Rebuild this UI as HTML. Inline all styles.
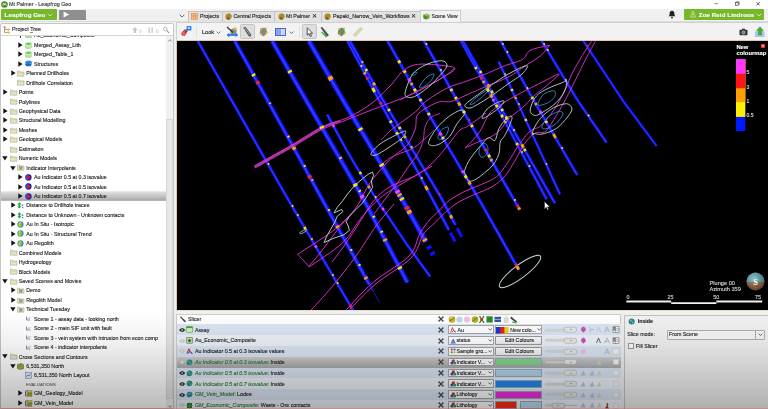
<!DOCTYPE html><html><head><meta charset="utf-8"><title>Mt Palmer - Leapfrog Geo</title><style>
html,body{margin:0;padding:0}
body{width:768px;height:409px;overflow:hidden;background:#f0f0f0;position:relative;font-family:"Liberation Sans",sans-serif;color:#1a1a1a}
.a{position:absolute}
.t{position:absolute;white-space:nowrap;font-size:5.3px;line-height:9.4px;height:9.4px;color:#1c1c1c;-webkit-text-stroke:.12px currentColor}
.b{font-weight:bold}
.i{font-style:italic}
svg{position:absolute;overflow:visible}
</style></head><body><div id="app" style="position:absolute;left:0;top:0;width:768px;height:409px;overflow:hidden;will-change:transform"><div class="a" style="left:0px;top:0px;width:768px;height:8.5px;background:#ffffff;"></div><svg style="left:1px;top:0.5px" width="7" height="7" viewBox="0 0 7 7"><circle cx="3.5" cy="3.5" r="3.3" fill="#4c8a30"/><path d="M1.6 4.6 L2.8 2.2 L3.6 3.8 L4.4 2.6 L5.4 4.6" stroke="#fff" stroke-width=".8" fill="none"/></svg><div class="t " style="left:9px;top:-0.50px;font-size:5.4px;color:#333">Mt Palmer - Leapfrog Geo</div><svg style="left:700px;top:0" width="68" height="8" viewBox="0 0 68 8"><path d="M14.5 3.6h3.4" stroke="#555" stroke-width=".7"/><rect x="35.6" y="2.6" width="2.6" height="2.6" fill="none" stroke="#444" stroke-width=".7"/><path d="M36.6 2.6v-.8h2.6v2.6h-.9" fill="none" stroke="#444" stroke-width=".6"/><path d="M56.5 2.2l3.2 3.2m0-3.2l-3.2 3.2" stroke="#333" stroke-width=".8"/></svg><div class="a" style="left:0px;top:8.5px;width:768px;height:13px;background:#f0f0f0;"></div><div class="a" style="left:1px;top:9px;width:55.5px;height:10.8px;background:#76b82a;border-radius:1px"></div><div class="t b" style="left:4.6px;top:10.00px;font-size:6.2px;color:#fff;letter-spacing:.05px">Leapfrog Geo</div><svg style="left:47px;top:12.6px" width="6" height="4" viewBox="0 0 6 4"><path d="M.7.8l2.3 2.2L5.3.8" stroke="#e8f4d8" stroke-width=".8" fill="none"/></svg><div class="a" style="left:59px;top:9.5px;width:27px;height:10px;background:#8f8f8f;border-radius:.5px"></div><svg style="left:62.5px;top:11.3px" width="7" height="7" viewBox="0 0 7 7"><path d="M.6.4v6l5.6-3z" fill="#fff"/></svg><div class="a" style="left:0px;top:21.3px;width:768px;height:0.8px;background:#dcdcdc;"></div><svg style="left:178.5px;top:13.5px" width="6" height="4" viewBox="0 0 6 4"><path d="M.7.8l2.3 2.2L5.3.8" stroke="#444" stroke-width=".8" fill="none"/></svg><div class="a" style="left:188px;top:11.2px;width:32.60000000000001px;height:10px;background:#e2e2e2;border:.4px solid #c4c4c4;border-bottom:none"></div><div class="a" style="left:221.8px;top:11.2px;width:51.39999999999999px;height:10px;background:#e2e2e2;border:.4px solid #c4c4c4;border-bottom:none"></div><div class="a" style="left:274.4px;top:11.2px;width:45.2px;height:10px;background:#e2e2e2;border:.4px solid #c4c4c4;border-bottom:none"></div><div class="a" style="left:320.8px;top:11.2px;width:98.00000000000001px;height:10px;background:#e2e2e2;border:.4px solid #c4c4c4;border-bottom:none"></div><div class="a" style="left:420px;top:10px;width:41px;height:13px;background:#f2f2f2;border:1px solid #cfcfcf;border-bottom:none;box-sizing:border-box"></div><svg style="left:191.4px;top:13px" width="7" height="7" viewBox="0 0 7 7"><g fill="none" stroke="#ee8a2c" stroke-width=".9"><rect x=".6" y=".6" width="2.3" height="2.3"/><rect x="4" y=".6" width="2.3" height="2.3"/><rect x=".6" y="4" width="2.3" height="2.3"/><rect x="4" y="4" width="2.3" height="2.3"/></g></svg><div class="t " style="left:200px;top:11.70px;font-size:5.3px;">Projects</div><svg style="left:225px;top:12.8px" width="7" height="7" viewBox="0 0 7 7"><circle cx="3.5" cy="3.5" r="3.1" fill="#e07a1a"/><path d="M3.5 .4A3.1 3.1 0 0 1 6.6 3.5L3.5 3.5z" fill="#6aa33a"/><path d="M1 5.2A3.1 3.1 0 0 0 5 6.2L3.5 3.5z" fill="#3d7a3a"/></svg><div class="t " style="left:233.5px;top:11.70px;font-size:5.3px;">Central Projects</div><svg style="left:277.5px;top:12.8px" width="7" height="7" viewBox="0 0 7 7"><circle cx="3.5" cy="3.5" r="3.1" fill="#e07a1a"/><path d="M3.5 .4A3.1 3.1 0 0 1 6.6 3.5L3.5 3.5z" fill="#6aa33a"/><path d="M1 5.2A3.1 3.1 0 0 0 5 6.2L3.5 3.5z" fill="#3d7a3a"/></svg><div class="t " style="left:286px;top:11.70px;font-size:5.3px;">Mt Palmer</div><div class="t " style="left:312.3px;top:11.60px;font-size:5.6px;color:#222">✕</div><svg style="left:324px;top:12.8px" width="7" height="7" viewBox="0 0 7 7"><circle cx="3.5" cy="3.5" r="3.1" fill="#e07a1a"/><path d="M3.5 .4A3.1 3.1 0 0 1 6.6 3.5L3.5 3.5z" fill="#6aa33a"/><path d="M1 5.2A3.1 3.1 0 0 0 5 6.2L3.5 3.5z" fill="#3d7a3a"/></svg><div class="t " style="left:333px;top:11.70px;font-size:5.3px;">Papaki_Narrow_Vein_Workflows</div><div class="t " style="left:411.3px;top:11.60px;font-size:5.6px;color:#222">✕</div><svg style="left:423px;top:12.5px" width="7" height="7" viewBox="0 0 7 7"><path d="M3.5.5L6.5 1.8V5.2L3.5 6.6L.5 5.2V1.8z" fill="#6aa33a"/><path d="M3.5 3.1V6.6L.5 5.2V1.8z" fill="#4b8a2a"/><path d="M.5 1.8L3.5 3.1L6.5 1.8L3.5.5z" fill="#9ccc5a"/></svg><div class="t " style="left:431.6px;top:11.70px;font-size:4.95px;">Scene View</div><svg style="left:667.600px;top:9.800px" width="8" height="9.200" viewBox="0 0 7 8"><path d="M3.5.6c1.5 0 2.1 1.2 2.1 2.6c0 1.3.6 1.9.9 2.3H.5c.3-.4.9-1 .9-2.3C1.4 1.800 2 .6 3.500 .6z" fill="#222"/><circle cx="3.500" cy="6.6" r=".8" fill="#222"/></svg><div class="a" style="left:684px;top:9.3px;width:80px;height:10.5px;background:#76b82a;border-radius:1px"></div><svg style="left:689.5px;top:11.4px" width="6" height="6.500" viewBox="0 0 6 6.500"><circle cx="3" cy="1.800" r="1.300" fill="none" stroke="#e8f4d8" stroke-width=".6"/><path d="M.6 6c0-1.800 1-2.500 2.400-2.500S5.400 4.200 5.400 6z" fill="none" stroke="#e8f4d8" stroke-width=".6"/></svg><div class="t b" style="left:698.8px;top:9.50px;font-size:6.1px;color:#fff;letter-spacing:.12px">Zoe Reid Lindroos</div><svg style="left:755.500px;top:12.800px" width="6" height="4" viewBox="0 0 6 4"><path d="M.7.8l2.300 2.200L5.300.8" stroke="#e8f4d8" stroke-width=".8" fill="none"/></svg><div class="a" style="left:0px;top:23px;width:174px;height:386px;background:#ffffff;border:1px solid #c6c6c6;border-radius:2px 2px 0 0;box-sizing:border-box"></div><div class="a" style="left:1px;top:35px;width:172px;height:1px;background:#d4d4d4;"></div><svg style="left:3px;top:25.500px" width="8" height="8" viewBox="0 0 8 8"><path d="M1.500 1v5.500h3M1.500 3.500h3" stroke="#777" stroke-width=".7" fill="none"/><rect x=".6" y=".3" width="2.200" height="1.800" fill="#e88b2a"/><rect x="4.300" y="2.600" width="2.400" height="1.800" fill="#e8a040"/><rect x="4.300" y="5.600" width="2.400" height="1.800" fill="#e8a040"/></svg><div class="t " style="left:12px;top:25.40px;font-size:5.4px;">Project Tree</div><div class="a" style="left:30px;top:32px;width:3px;height:1px;background:#8a8a8a;"></div><svg style="left:131px;top:26px" width="42" height="9" viewBox="0 0 42 9"><g fill="#c6c6c6"><path d="M4 1L1.200 4h1.600v3h2.400V4h1.600z"/><rect x="17.500" y="1.500" width="1.300" height="5.500"/><rect x="20.500" y="1.500" width="1.300" height="5.500"/></g><g fill="none" stroke="#c0c0c0" stroke-width=".6"><ellipse cx="9.300" cy="5.200" rx="1" ry="1.600"/><ellipse cx="26.300" cy="5.200" rx="1" ry="1.600"/></g><circle cx="34.300" cy="3" r="1.800" fill="none" stroke="#aaa" stroke-width=".8"/><path d="M35.600 4.400l2.600 2.800" stroke="#999" stroke-width="1.100"/></svg><div class="a" style="left:166px;top:36px;width:7px;height:372px;background:#f0f0f0;"></div><svg style="left:167.500px;top:38.500px" width="4" height="3" viewBox="0 0 4 3"><path d="M.4 2.400L2 .7l1.600 1.700" stroke="#555" stroke-width=".7" fill="none"/></svg><svg style="left:167.500px;top:405px" width="4" height="3" viewBox="0 0 4 3"><path d="M.4.600L2 2.300 3.600.600" stroke="#555" stroke-width=".7" fill="none"/></svg><div class="a" style="left:166px;top:119px;width:7px;height:280px;background:#e6e6e6;border:1px solid #d8d8d8;box-sizing:border-box"></div><svg style="left:0;top:0" width="174" height="409" viewBox="0 0 174 409"><defs><linearGradient id="sg" x1="0" y1="0" x2="0" y2="1"><stop offset="0" stop-color="#e2e2e2"/><stop offset=".85" stop-color="#b2b2b2"/><stop offset="1" stop-color="#8e8e8e"/></linearGradient></defs><rect x="1" y="191.27" width="165" height="9.400" fill="url(#sg)"/></svg><div class="a" style="left:0;top:36.300px;width:166px;height:3px;overflow:hidden"><div class="t" style="left:34px;top:-5.500px">Au_Economic_Composite</div><div class="a" style="left:25px;top:-4px;width:6.500px;height:6px;background:#a8dc90;border-radius:1px"></div><div class="a" style="left:19.500px;top:0px;width:1.500px;height:1.500px;background:#222;border-radius:1px"></div></div><svg style="left:18px;top:41.85px" width="4.800" height="6" viewBox="0 0 4.800 6"><path d="M.3.200v5.600L4.600 3z" fill="#161616"/></svg><svg style="left:25px;top:41.550000000000004px" width="7" height="6.800" viewBox="0 0 7 6.800"><rect x=".4" y=".8" width="6" height="5.600" rx=".8" fill="#b8e8a0" stroke="#7cc060" stroke-width=".4"/><path d="M1.500 1.200h4.200l-.5 1.600H2z" fill="#58b848"/><path d="M1.200 3.500h4.600" stroke="#e8ffe0" stroke-width=".5"/></svg><div class="t " style="left:34px;top:40.90px;">Merged_Assay_Lith</div><svg style="left:18px;top:51.295px" width="4.800" height="6" viewBox="0 0 4.800 6"><path d="M.3.200v5.600L4.600 3z" fill="#161616"/></svg><svg style="left:25px;top:50.995000000000005px" width="7" height="6.800" viewBox="0 0 7 6.800"><rect x=".4" y=".8" width="6" height="5.600" rx=".8" fill="#b8e8a0" stroke="#7cc060" stroke-width=".4"/><path d="M1.500 1.200h4.200l-.5 1.600H2z" fill="#58b848"/><path d="M1.200 3.500h4.600" stroke="#e8ffe0" stroke-width=".5"/></svg><div class="t " style="left:34px;top:50.34px;">Merged_Table_1</div><svg style="left:18px;top:60.74px" width="4.800" height="6" viewBox="0 0 4.800 6"><path d="M.3.200v5.600L4.600 3z" fill="#161616"/></svg><svg style="left:25px;top:60.440000000000005px" width="7" height="6.800" viewBox="0 0 7 6.800"><ellipse cx="3.600" cy="2" rx="3" ry="1.500" fill="#2a86e0"/><ellipse cx="3.400" cy="4.700" rx="3" ry="1.600" fill="#1868c8"/><path d="M.6 2v2.600M6.500 2v2.600" stroke="#1868c8" stroke-width=".6"/></svg><div class="t " style="left:34px;top:59.79px;">Structures</div><svg style="left:10.5px;top:70.185px" width="4.800" height="6" viewBox="0 0 4.800 6"><path d="M.3.200v5.600L4.600 3z" fill="#161616"/></svg><svg style="left:17.3px;top:69.985px" width="7.400" height="6.600" viewBox="0 0 7.400 6.600"><path d="M.4 1.200h2.400l.6.800h3.600v4.200H.4z" fill="#e6e6c4" stroke="#9c9c7c" stroke-width=".5"/><path d="M.4 2.900h6.600" stroke="#b8b894" stroke-width=".4"/></svg><div class="t " style="left:26.3px;top:69.23px;">Planned Drillholes</div><svg style="left:17.3px;top:79.42999999999999px" width="7.400" height="6.600" viewBox="0 0 7.400 6.600"><path d="M.4 1.200h2.400l.6.800h3.600v4.200H.4z" fill="#e6e6c4" stroke="#9c9c7c" stroke-width=".5"/><path d="M.4 2.900h6.600" stroke="#b8b894" stroke-width=".4"/></svg><div class="t " style="left:26.3px;top:78.68px;">Drillhole Correlation</div><svg style="left:3px;top:89.075px" width="4.800" height="6" viewBox="0 0 4.800 6"><path d="M.3.200v5.600L4.600 3z" fill="#161616"/></svg><svg style="left:9.5px;top:88.875px" width="7.400" height="6.600" viewBox="0 0 7.400 6.600"><path d="M.4 1.200h2.400l.6.800h3.600v4.200H.4z" fill="#e6e6c4" stroke="#9c9c7c" stroke-width=".5"/><path d="M.4 2.900h6.600" stroke="#b8b894" stroke-width=".4"/></svg><div class="t " style="left:18.7px;top:88.12px;">Points</div><svg style="left:9.5px;top:98.32000000000001px" width="7.400" height="6.600" viewBox="0 0 7.400 6.600"><path d="M.4 1.200h2.400l.6.800h3.600v4.200H.4z" fill="#e6e6c4" stroke="#9c9c7c" stroke-width=".5"/><path d="M.4 2.900h6.600" stroke="#b8b894" stroke-width=".4"/></svg><div class="t " style="left:18.7px;top:97.57px;">Polylines</div><svg style="left:3px;top:107.965px" width="4.800" height="6" viewBox="0 0 4.800 6"><path d="M.3.200v5.600L4.600 3z" fill="#161616"/></svg><svg style="left:9.5px;top:107.765px" width="7.400" height="6.600" viewBox="0 0 7.400 6.600"><path d="M.4 1.200h2.400l.6.800h3.600v4.200H.4z" fill="#e6e6c4" stroke="#9c9c7c" stroke-width=".5"/><path d="M.4 2.900h6.600" stroke="#b8b894" stroke-width=".4"/></svg><div class="t " style="left:18.7px;top:107.02px;">Geophysical Data</div><svg style="left:3px;top:117.41px" width="4.800" height="6" viewBox="0 0 4.800 6"><path d="M.3.200v5.600L4.600 3z" fill="#161616"/></svg><svg style="left:9.5px;top:117.21px" width="7.400" height="6.600" viewBox="0 0 7.400 6.600"><path d="M.4 1.200h2.400l.6.800h3.600v4.200H.4z" fill="#e6e6c4" stroke="#9c9c7c" stroke-width=".5"/><path d="M.4 2.900h6.600" stroke="#b8b894" stroke-width=".4"/></svg><div class="t " style="left:18.7px;top:116.46px;">Structural Modelling</div><svg style="left:3px;top:126.85499999999999px" width="4.800" height="6" viewBox="0 0 4.800 6"><path d="M.3.200v5.600L4.600 3z" fill="#161616"/></svg><svg style="left:9.5px;top:126.65499999999999px" width="7.400" height="6.600" viewBox="0 0 7.400 6.600"><path d="M.4 1.200h2.400l.6.800h3.600v4.200H.4z" fill="#e6e6c4" stroke="#9c9c7c" stroke-width=".5"/><path d="M.4 2.900h6.600" stroke="#b8b894" stroke-width=".4"/></svg><div class="t " style="left:18.7px;top:125.90px;">Meshes</div><svg style="left:3px;top:136.3px" width="4.800" height="6" viewBox="0 0 4.800 6"><path d="M.3.200v5.600L4.600 3z" fill="#161616"/></svg><svg style="left:9.5px;top:136.10000000000002px" width="7.400" height="6.600" viewBox="0 0 7.400 6.600"><path d="M.4 1.200h2.400l.6.800h3.600v4.200H.4z" fill="#e6e6c4" stroke="#9c9c7c" stroke-width=".5"/><path d="M.4 2.900h6.600" stroke="#b8b894" stroke-width=".4"/></svg><div class="t " style="left:18.7px;top:135.35px;">Geological Models</div><svg style="left:9.5px;top:145.54500000000002px" width="7.400" height="6.600" viewBox="0 0 7.400 6.600"><path d="M.4 1.200h2.400l.6.800h3.600v4.200H.4z" fill="#e6e6c4" stroke="#9c9c7c" stroke-width=".5"/><path d="M.4 2.900h6.600" stroke="#b8b894" stroke-width=".4"/></svg><div class="t " style="left:18.7px;top:144.80px;">Estimation</div><svg style="left:2.1px;top:156.09px" width="5.800" height="4.600" viewBox="0 0 5.800 4.600"><path d="M.2.300h5.400L2.900 4.400z" fill="#161616"/></svg><svg style="left:9.5px;top:154.99px" width="7.400" height="6.600" viewBox="0 0 7.400 6.600"><path d="M.4 1.200h2.400l.6.800h3.600v4.200H.4z" fill="#e6e6c4" stroke="#9c9c7c" stroke-width=".5"/><path d="M.4 2.900h6.600" stroke="#b8b894" stroke-width=".4"/></svg><div class="t " style="left:18.7px;top:154.24px;">Numeric Models</div><svg style="left:9.6px;top:165.535px" width="5.800" height="4.600" viewBox="0 0 5.800 4.600"><path d="M.2.300h5.400L2.900 4.400z" fill="#161616"/></svg><svg style="left:17.3px;top:164.435px" width="7.400" height="6.600" viewBox="0 0 7.400 6.600"><path d="M.4 1.200h2.400l.6.800h3.600v4.200H.4z" fill="#e6e6c4" stroke="#9c9c7c" stroke-width=".5"/><rect x="2.500" y="2.800" width="2.600" height="2.400" fill="#8aa88a" stroke="#667" stroke-width=".3"/></svg><div class="t " style="left:26.3px;top:163.69px;">Indicator Interpolants</div><svg style="left:18px;top:174.08px" width="4.800" height="6" viewBox="0 0 4.800 6"><path d="M.3.200v5.600L4.600 3z" fill="#161616"/></svg><svg style="left:25px;top:173.78px" width="7" height="6.800" viewBox="0 0 7 6.800"><circle cx="3.500" cy="3.400" r="3.100" fill="#1c1c98"/><path d="M3.500.3A3.100 3.100 0 0 0 3.500 6.500z" fill="#2848e8"/><circle cx="3.600" cy="3.400" r="1.700" fill="#e41818"/></svg><div class="t " style="left:34px;top:173.13px;">Au Indicator 0.5 at 0.3 isovalue</div><svg style="left:18px;top:183.525px" width="4.800" height="6" viewBox="0 0 4.800 6"><path d="M.3.200v5.600L4.600 3z" fill="#161616"/></svg><svg style="left:25px;top:183.225px" width="7" height="6.800" viewBox="0 0 7 6.800"><circle cx="3.500" cy="3.400" r="3.100" fill="#1c1c98"/><path d="M3.500.3A3.100 3.100 0 0 0 3.500 6.500z" fill="#2848e8"/><circle cx="3.600" cy="3.400" r="1.700" fill="#e41818"/></svg><div class="t " style="left:34px;top:182.58px;">Au Indicator 0.5 at 0.5 isovalue</div><svg style="left:18px;top:192.97px" width="4.800" height="6" viewBox="0 0 4.800 6"><path d="M.3.200v5.600L4.600 3z" fill="#161616"/></svg><svg style="left:25px;top:192.67px" width="7" height="6.800" viewBox="0 0 7 6.800"><circle cx="3.500" cy="3.400" r="3.100" fill="#1c1c98"/><path d="M3.500.3A3.100 3.100 0 0 0 3.500 6.500z" fill="#2848e8"/><circle cx="3.600" cy="3.400" r="1.700" fill="#e41818"/></svg><div class="t " style="left:34px;top:192.02px;">Au Indicator 0.5 at 0.7 isovalue</div><svg style="left:10.5px;top:202.415px" width="4.800" height="6" viewBox="0 0 4.800 6"><path d="M.3.200v5.600L4.600 3z" fill="#161616"/></svg><svg style="left:17.3px;top:202.11499999999998px" width="7" height="6.800" viewBox="0 0 7 6.800"><path d="M2.400.2L.3 2.500h1.300V4.300H.3L2.400 6.600 4.500 4.300H3.200V2.500H4.500z" fill="#28a040"/><rect x="4.800" y="2.600" width="1.500" height="1.300" fill="#4868d8"/><rect x="5" y="5" width="1.300" height="1.200" fill="#4868d8"/></svg><div class="t " style="left:26.3px;top:201.47px;">Distance to Drillhole traces</div><svg style="left:10.5px;top:211.85999999999999px" width="4.800" height="6" viewBox="0 0 4.800 6"><path d="M.3.200v5.600L4.600 3z" fill="#161616"/></svg><svg style="left:17.3px;top:211.55999999999997px" width="7" height="6.800" viewBox="0 0 7 6.800"><path d="M2.400.2L.3 2.500h1.300V4.300H.3L2.400 6.600 4.500 4.300H3.200V2.500H4.500z" fill="#28a040"/><rect x="4.800" y="2.600" width="1.500" height="1.300" fill="#4868d8"/><rect x="5" y="5" width="1.300" height="1.200" fill="#4868d8"/></svg><div class="t " style="left:26.3px;top:210.91px;">Distance to Unknown - Unknown contacts</div><svg style="left:10.5px;top:221.305px" width="4.800" height="6" viewBox="0 0 4.800 6"><path d="M.3.200v5.600L4.600 3z" fill="#161616"/></svg><svg style="left:17.3px;top:221.005px" width="7" height="6.800" viewBox="0 0 7 6.800"><circle cx="3.500" cy="3.400" r="3.100" fill="#2a98b0"/><path d="M2.200 1.200c1.600-.6 2.800.6 2.600 2.200c-.2 1.400-1.200 2.200-2.400 2c-1-.4-1.200-1.600-.8-2.600z" fill="#e8c820"/><circle cx="3.600" cy="3.300" r=".8" fill="#60b040"/></svg><div class="t " style="left:26.3px;top:220.36px;">Au In Situ - Isotropic</div><svg style="left:10.5px;top:230.75px" width="4.800" height="6" viewBox="0 0 4.800 6"><path d="M.3.200v5.600L4.600 3z" fill="#161616"/></svg><svg style="left:17.3px;top:230.45px" width="7" height="6.800" viewBox="0 0 7 6.800"><circle cx="3.500" cy="3.400" r="3.100" fill="#2a98b0"/><path d="M2.200 1.200c1.600-.6 2.800.6 2.600 2.200c-.2 1.400-1.200 2.200-2.400 2c-1-.4-1.200-1.600-.8-2.600z" fill="#e8c820"/><circle cx="3.600" cy="3.300" r=".8" fill="#60b040"/></svg><div class="t " style="left:26.3px;top:229.80px;">Au In Situ - Structural Trend</div><svg style="left:10.5px;top:240.195px" width="4.800" height="6" viewBox="0 0 4.800 6"><path d="M.3.200v5.600L4.600 3z" fill="#161616"/></svg><svg style="left:17.3px;top:239.89499999999998px" width="7" height="6.800" viewBox="0 0 7 6.800"><circle cx="3.500" cy="3.400" r="3.100" fill="#2a98b0"/><path d="M2.200 1.200c1.600-.6 2.800.6 2.600 2.200c-.2 1.400-1.200 2.200-2.400 2c-1-.4-1.200-1.600-.8-2.600z" fill="#e8c820"/><circle cx="3.600" cy="3.300" r=".8" fill="#60b040"/></svg><div class="t " style="left:26.3px;top:239.25px;">Au Regolith</div><svg style="left:9.5px;top:249.44000000000003px" width="7.400" height="6.600" viewBox="0 0 7.400 6.600"><path d="M.4 1.200h2.400l.6.800h3.600v4.200H.4z" fill="#e6e6c4" stroke="#9c9c7c" stroke-width=".5"/><path d="M.4 2.900h6.600" stroke="#b8b894" stroke-width=".4"/></svg><div class="t " style="left:18.7px;top:248.69px;">Combined Models</div><svg style="left:9.5px;top:258.88500000000005px" width="7.400" height="6.600" viewBox="0 0 7.400 6.600"><path d="M.4 1.200h2.400l.6.800h3.600v4.200H.4z" fill="#e6e6c4" stroke="#9c9c7c" stroke-width=".5"/><path d="M.4 2.900h6.600" stroke="#b8b894" stroke-width=".4"/></svg><div class="t " style="left:18.7px;top:258.14px;">Hydrogeology</div><svg style="left:9.5px;top:268.33000000000004px" width="7.400" height="6.600" viewBox="0 0 7.400 6.600"><path d="M.4 1.200h2.400l.6.800h3.600v4.200H.4z" fill="#e6e6c4" stroke="#9c9c7c" stroke-width=".5"/><path d="M.4 2.900h6.600" stroke="#b8b894" stroke-width=".4"/></svg><div class="t " style="left:18.7px;top:267.58px;">Block Models</div><svg style="left:2.1px;top:278.875px" width="5.800" height="4.600" viewBox="0 0 5.800 4.600"><path d="M.2.300h5.400L2.900 4.400z" fill="#161616"/></svg><svg style="left:9.5px;top:277.77500000000003px" width="7.400" height="6.600" viewBox="0 0 7.400 6.600"><path d="M.4 1.200h2.400l.6.800h3.600v4.200H.4z" fill="#e6e6c4" stroke="#9c9c7c" stroke-width=".5"/><path d="M.4 2.900h6.600" stroke="#b8b894" stroke-width=".4"/></svg><div class="t " style="left:18.7px;top:277.03px;">Saved Scenes and Movies</div><svg style="left:10.5px;top:287.42px" width="4.800" height="6" viewBox="0 0 4.800 6"><path d="M.3.200v5.600L4.600 3z" fill="#161616"/></svg><svg style="left:17.3px;top:287.22px" width="7.400" height="6.600" viewBox="0 0 7.400 6.600"><path d="M.4 1.200h2.400l.6.800h3.600v4.200H.4z" fill="#e6e6c4" stroke="#9c9c7c" stroke-width=".5"/><rect x="2.500" y="2.800" width="2.600" height="2.400" fill="#8aa88a" stroke="#667" stroke-width=".3"/></svg><div class="t " style="left:26.3px;top:286.47px;">Demo</div><svg style="left:10.5px;top:296.865px" width="4.800" height="6" viewBox="0 0 4.800 6"><path d="M.3.200v5.600L4.600 3z" fill="#161616"/></svg><svg style="left:17.3px;top:296.665px" width="7.400" height="6.600" viewBox="0 0 7.400 6.600"><path d="M.4 1.200h2.400l.6.800h3.600v4.200H.4z" fill="#e6e6c4" stroke="#9c9c7c" stroke-width=".5"/><rect x="2.500" y="2.800" width="2.600" height="2.400" fill="#8aa88a" stroke="#667" stroke-width=".3"/></svg><div class="t " style="left:26.3px;top:295.92px;">Regolith Model</div><svg style="left:9.6px;top:307.21000000000004px" width="5.800" height="4.600" viewBox="0 0 5.800 4.600"><path d="M.2.300h5.400L2.900 4.400z" fill="#161616"/></svg><svg style="left:17.3px;top:306.11000000000007px" width="7.400" height="6.600" viewBox="0 0 7.400 6.600"><path d="M.4 1.200h2.400l.6.800h3.600v4.200H.4z" fill="#e6e6c4" stroke="#9c9c7c" stroke-width=".5"/><rect x="2.500" y="2.800" width="2.600" height="2.400" fill="#8aa88a" stroke="#667" stroke-width=".3"/></svg><div class="t " style="left:26.3px;top:305.36px;">Technical Tuesday</div><svg style="left:26px;top:316.45500000000004px" width="5" height="5" viewBox="0 0 5 5"><path d="M.5.500v3.500h3.800" stroke="#2a70c0" stroke-width=".7" fill="none"/><path d="M1.200 3.200l1.200-1.500 1 .8 1.200-1.500" stroke="#e08020" stroke-width=".6" fill="none"/></svg><div class="t " style="left:34px;top:314.81px;">Scene 1 - assay data - looking north</div><svg style="left:26px;top:325.90000000000003px" width="5" height="5" viewBox="0 0 5 5"><path d="M.5.500v3.500h3.800" stroke="#2a70c0" stroke-width=".7" fill="none"/><path d="M1.200 3.200l1.200-1.500 1 .8 1.200-1.500" stroke="#e08020" stroke-width=".6" fill="none"/></svg><div class="t " style="left:34px;top:324.25px;">Scene 2 - main SIF unit with fault</div><svg style="left:26px;top:335.345px" width="5" height="5" viewBox="0 0 5 5"><path d="M.5.500v3.500h3.800" stroke="#2a70c0" stroke-width=".7" fill="none"/><path d="M1.200 3.200l1.200-1.500 1 .8 1.200-1.500" stroke="#e08020" stroke-width=".6" fill="none"/></svg><div class="t " style="left:34px;top:333.70px;">Scene 3 - vein system with intrusion from econ comp</div><svg style="left:26px;top:344.79px" width="5" height="5" viewBox="0 0 5 5"><path d="M.5.500v3.500h3.800" stroke="#2a70c0" stroke-width=".7" fill="none"/><path d="M1.200 3.200l1.200-1.500 1 .8 1.200-1.500" stroke="#e08020" stroke-width=".6" fill="none"/></svg><div class="t " style="left:34px;top:343.14px;">Scene 4 - indicator interpolants</div><svg style="left:2.1px;top:354.435px" width="5.800" height="4.600" viewBox="0 0 5.800 4.600"><path d="M.2.300h5.400L2.900 4.400z" fill="#161616"/></svg><svg style="left:9.5px;top:353.33500000000004px" width="7.400" height="6.600" viewBox="0 0 7.400 6.600"><path d="M.4 1.200h2.400l.6.800h3.600v4.200H.4z" fill="#e6e6c4" stroke="#9c9c7c" stroke-width=".5"/><path d="M.4 2.900h6.600" stroke="#b8b894" stroke-width=".4"/></svg><div class="t " style="left:18.7px;top:352.59px;">Cross Sections and Contours</div><svg style="left:9.6px;top:363.88px" width="5.800" height="4.600" viewBox="0 0 5.800 4.600"><path d="M.2.300h5.400L2.900 4.400z" fill="#161616"/></svg><svg style="left:17.3px;top:362.68px" width="7" height="6.800" viewBox="0 0 7 6.800"><path d="M.5 1.500L4.500.500l2 1.200v4L2.500 6.500l-2-1z" fill="#b4ac3c" stroke="#4a4a20" stroke-width=".5"/><path d="M1.500 2.500l3-1M1.500 4l3.500-1" stroke="#4a8a3a" stroke-width=".6"/></svg><div class="t " style="left:26.3px;top:362.03px;">6,531,350 North</div><svg style="left:25px;top:372.125px" width="7" height="6.800" viewBox="0 0 7 6.800"><rect x=".5" y=".6" width="6" height="5.600" fill="#e8f0fa" stroke="#5a7aa8" stroke-width=".5"/><path d="M1.300 4.800l1.500-2 1.200 1.200 1.500-2.200" stroke="#2a60b0" stroke-width=".6" fill="none"/></svg><div class="t " style="left:34px;top:371.48px;">6,531,350 North Layout</div><div class="t " style="left:26px;top:379.92px;font-size:4.2px;color:#707070;letter-spacing:.1px">EVALUATIONS</div><svg style="left:18px;top:390.4150000000001px" width="4.800" height="6" viewBox="0 0 4.800 6"><path d="M.3.200v5.600L4.600 3z" fill="#161616"/></svg><svg style="left:25px;top:390.11500000000007px" width="7.500" height="6.800" viewBox="0 0 7.500 6.800"><path d="M1.200.400c-.8 2-.8 4 0 6" stroke="#222" stroke-width=".9" fill="none"/><rect x="2.200" y=".8" width="4.800" height="5.400" fill="#e8d040" stroke="#555" stroke-width=".3"/><path d="M2.200 2.600h4.800v1.800H2.200z" fill="#58a848"/><path d="M2.200 4.400h4.800v1.800H2.200z" fill="#c89030"/></svg><div class="t " style="left:34px;top:389.47px;">GM_Geology_Model</div><svg style="left:18px;top:399.86000000000007px" width="4.800" height="6" viewBox="0 0 4.800 6"><path d="M.3.200v5.600L4.600 3z" fill="#161616"/></svg><svg style="left:25px;top:399.56000000000006px" width="7.500" height="6.800" viewBox="0 0 7.500 6.800"><path d="M1.200.400c-.8 2-.8 4 0 6" stroke="#222" stroke-width=".9" fill="none"/><rect x="2.200" y=".8" width="4.800" height="5.400" fill="#e8d040" stroke="#555" stroke-width=".3"/><path d="M2.200 2.600h4.800v1.800H2.200z" fill="#58a848"/><path d="M2.200 4.400h4.800v1.800H2.200z" fill="#c89030"/></svg><div class="t " style="left:34px;top:398.91px;">GM_Vein_Model</div><div class="a" style="left:176.3px;top:22px;width:592px;height:19px;background:#f2f2f2;border-top:.5px solid #d0d0d0;border-left:.5px solid #d0d0d0;box-sizing:border-box"></div><div class="a" style="left:240px;top:24px;width:15px;height:15px;background:#dedede;border:1px solid #c4c4c4;box-sizing:border-box;border-radius:1.500px"></div><div class="a" style="left:302px;top:24px;width:15px;height:15px;background:#dedede;border:1px solid #c4c4c4;box-sizing:border-box;border-radius:1.500px"></div><div class="a" style="left:196px;top:26px;width:1px;height:12px;background:#e2e2e2;"></div><div class="a" style="left:299px;top:26px;width:1px;height:12px;background:#e2e2e2;"></div><svg style="left:179.500px;top:25px" width="13" height="13" viewBox="0 0 13 13"><path d="M1.200 8.200l3.300-3.600 3 1.800-2.800 4.600-2.900-.6z" fill="#d23030"/><path d="M2 8.600l2.800-1.800M2.600 10l2.600-1.600" stroke="#f4b0b0" stroke-width=".7"/><path d="M4.500 4.600l3 1.800" stroke="#8a1a1a" stroke-width=".6"/><rect x="6.600" y="1" width="4.800" height="4.600" rx=".6" fill="#2a86e8"/><rect x="7.800" y="2.200" width="2" height="1.800" fill="#bfe0ff"/><path d="M5.500 6l2.500-2" stroke="#2a60c0" stroke-width="1.200"/></svg><div class="t " style="left:202px;top:27.60px;font-size:5.6px;">Look</div><svg style="left:215.500px;top:30.800px" width="5" height="3.500" viewBox="0 0 5 3.500"><path d="M.6.600l1.900 1.900L4.400.600" stroke="#444" stroke-width=".7" fill="none"/></svg><svg style="left:225.500px;top:25.500px" width="13" height="12" viewBox="0 0 13 12"><path d="M4.500 3.500l4-1.500 2 1.500v4l-3 2-3-1.500z" fill="#8c8c8c"/><path d="M1 1l6 5.500" stroke="#333" stroke-width="1.300"/><path d="M2 9h8.500" stroke="#2a7ae8" stroke-width="1.800"/><path d="M3.200 6.800L.6 9l2.600 2.200zM9.600 6.800L12.200 9l-2.600 2.200z" fill="#2a7ae8"/><circle cx="9.300" cy="2.600" r="1.400" fill="#e8c828"/></svg><svg style="left:242px;top:26px" width="11" height="12" viewBox="0 0 11 12"><path d="M1.200 1.600l2.200-.8 6 8-.6 2-2-.6z" fill="#4a4a4a"/><path d="M2.600 1.600l5.800 8" stroke="#c8c8c8" stroke-width=".8"/></svg><svg style="left:258px;top:26px" width="11" height="12" viewBox="0 0 11 12"><path d="M3 2.500l4.500-.5 1.500 5-3.500 3-3.500-2z" fill="#888" stroke="#555" stroke-width=".4"/><circle cx="3" cy="3" r="1.100" fill="#e8c020"/><circle cx="8" cy="2.600" r="1.100" fill="#e8c020"/><circle cx="8.600" cy="7" r="1.100" fill="#e8c020"/><circle cx="3" cy="8" r="1.100" fill="#e8c020"/></svg><div class="a" style="left:275px;top:28px;width:11px;height:8px;background:#8aa4f0;border:1px solid #4868d0;box-sizing:border-box"></div><div class="a" style="left:281px;top:29px;width:4px;height:6px;background:#d4d8e6;"></div><svg style="left:289.300px;top:30.800px" width="5" height="3.500" viewBox="0 0 5 3.500"><path d="M.6.600l1.900 1.900L4.400.600" stroke="#444" stroke-width=".7" fill="none"/></svg><svg style="left:306px;top:26.500px" width="8" height="11" viewBox="0 0 8 11"><path d="M1.200.8v7.400l1.800-1.600 1.300 2.900 1.200-.5-1.300-2.800h2.400z" fill="#fff" stroke="#111" stroke-width=".7"/></svg><svg style="left:319px;top:26px" width="12" height="12" viewBox="0 0 12 12"><path d="M1.500 1.500l1.800-.4 6.500 8-1 1.500-1.600-.6z" fill="#555"/><path d="M2.500 6l5 5" stroke="#30c030" stroke-width="1.300"/></svg><svg style="left:335.500px;top:26px" width="12" height="12" viewBox="0 0 12 12"><path d="M3 2.500l4.500-.5 1.500 5-3.500 3-3.500-2z" fill="#777" stroke="#555" stroke-width=".4"/><circle cx="3.400" cy="3" r="1.100" fill="#e8c020"/><circle cx="8" cy="2.600" r="1.100" fill="#e8c020"/><circle cx="8.600" cy="7.500" r="1.100" fill="#e8c020"/><circle cx="3.400" cy="8.500" r="1.100" fill="#e8c020"/><path d="M3 7l5-3.500" stroke="#30c030" stroke-width="1.300"/></svg><svg style="left:352px;top:26px" width="12" height="12" viewBox="0 0 12 12"><path d="M1.500 9l7-7.500 1.800 1.500-7 7.500z" fill="#e8e0a0" stroke="#999" stroke-width=".5"/></svg><svg style="left:739px;top:28px" width="9" height="8" viewBox="0 0 9 8"><rect x=".5" y="1.800" width="8" height="5.400" rx=".8" fill="#333"/><rect x="3" y=".7" width="3" height="1.500" fill="#333"/><circle cx="4.500" cy="4.500" r="1.700" fill="#777" stroke="#ddd" stroke-width=".5"/></svg><svg style="left:754px;top:25.500px" width="12" height="12" viewBox="0 0 12 12"><rect x="1" y="5.500" width="9.500" height="5.500" fill="#a8c4e8"/><path d="M6 .8L2.500 4.800h2V9h3V4.800h2z" fill="#48b030" stroke="#2a8020" stroke-width=".4"/></svg><div class="a" style="left:176px;top:40px;width:592px;height:271px;background:#000;border-top:1px solid #e0c8a8;border-left:1px solid #e0c8a8;border-bottom:1px solid #e8dcc8;box-sizing:border-box;overflow:hidden"></div><svg style="left:0;top:0" width="768" height="409" viewBox="0 0 768 409"><defs><clipPath id="sc"><rect x="177" y="41" width="592" height="269"/></clipPath></defs><g clip-path="url(#sc)"><path d="M197.8 41 L288.5 200 L353.5 311" fill="none" stroke="#1010f8" stroke-width="2.9"/><path d="M197.8 41 L288.5 200 L353.5 311" fill="none" stroke="#3a52ff" stroke-width="1.16" opacity=".7" transform="translate(-.2,0)"/><path d="M234.8 41 L322.6 200 L369.5 284.5" fill="none" stroke="#1010f8" stroke-width="4.2"/><path d="M234.8 41 L322.6 200 L369.5 284.5" fill="none" stroke="#3a52ff" stroke-width="1.68" opacity=".7" transform="translate(-.2,0)"/><path d="M272.2 41 L306 100 L364 200 L407.5 282.5" fill="none" stroke="#1010f8" stroke-width="4.8"/><path d="M272.2 41 L306 100 L364 200 L407.5 282.5" fill="none" stroke="#3a52ff" stroke-width="1.92" opacity=".7" transform="translate(-.2,0)"/><path d="M327.2 114.5 L346.6 150 L355.4 165 L377 200 L407.3 245 L430.3 276.6" fill="none" stroke="#1010f8" stroke-width="2.8"/><path d="M327.2 114.5 L346.6 150 L355.4 165 L377 200 L407.3 245 L430.3 276.6" fill="none" stroke="#3a52ff" stroke-width="1.12" opacity=".7" transform="translate(-.2,0)"/><path d="M309 41 L343 100 L402.5 200 L426 242" fill="none" stroke="#1010f8" stroke-width="5.3"/><path d="M309 41 L343 100 L402.5 200 L426 242" fill="none" stroke="#3a52ff" stroke-width="2.12" opacity=".7" transform="translate(-.2,0)"/><path d="M347.5 41 L379 100 L433 200 L449 230" fill="none" stroke="#1010f8" stroke-width="3.2"/><path d="M347.5 41 L379 100 L433 200 L449 230" fill="none" stroke="#3a52ff" stroke-width="1.28" opacity=".7" transform="translate(-.2,0)"/><path d="M350 41 L383 100 L442.5 200 L455.5 225" fill="none" stroke="#1010f8" stroke-width="3.2"/><path d="M350 41 L383 100 L442.5 200 L455.5 225" fill="none" stroke="#3a52ff" stroke-width="1.28" opacity=".7" transform="translate(-.2,0)"/><path d="M387.7 41 L420.5 100 L479.5 200 L519 270" fill="none" stroke="#1010f8" stroke-width="3.3"/><path d="M387.7 41 L420.5 100 L479.5 200 L519 270" fill="none" stroke="#3a52ff" stroke-width="1.32" opacity=".7" transform="translate(-.2,0)"/><path d="M424 41 L457 100 L520 210" fill="none" stroke="#1010f8" stroke-width="3.3"/><path d="M424 41 L457 100 L520 210" fill="none" stroke="#3a52ff" stroke-width="1.32" opacity=".7" transform="translate(-.2,0)"/><path d="M461 41 L493.5 100 L546.7 199.3" fill="none" stroke="#1010f8" stroke-width="3.0"/><path d="M461 41 L493.5 100 L546.7 199.3" fill="none" stroke="#3a52ff" stroke-width="1.20" opacity=".7" transform="translate(-.2,0)"/><path d="M463 41 L496.5 100 L555 203.3" fill="none" stroke="#1010f8" stroke-width="3.0"/><path d="M463 41 L496.5 100 L555 203.3" fill="none" stroke="#3a52ff" stroke-width="1.20" opacity=".7" transform="translate(-.2,0)"/><path d="M500.7 41 L533.5 100 L577.3 175" fill="none" stroke="#1010f8" stroke-width="2.9"/><path d="M500.7 41 L533.5 100 L577.3 175" fill="none" stroke="#3a52ff" stroke-width="1.16" opacity=".7" transform="translate(-.2,0)"/><path d="M498.7 61.5 L516.6 100 L560 194.3" fill="none" stroke="#1010f8" stroke-width="2.7"/><path d="M498.7 61.5 L516.6 100 L560 194.3" fill="none" stroke="#3a52ff" stroke-width="1.08" opacity=".7" transform="translate(-.2,0)"/><path d="M541.8 41 L577.5 100 L606.7 142.7" fill="none" stroke="#1010f8" stroke-width="2.9"/><path d="M541.8 41 L577.5 100 L606.7 142.7" fill="none" stroke="#3a52ff" stroke-width="1.16" opacity=".7" transform="translate(-.2,0)"/><path d="M583.5 41 L622.5 100 L656.7 146" fill="none" stroke="#1010f8" stroke-width="2.5"/><path d="M583.5 41 L622.5 100 L656.7 146" fill="none" stroke="#3a52ff" stroke-width="1.00" opacity=".7" transform="translate(-.2,0)"/><line x1="428.2" y1="246" x2="429.9" y2="249" stroke="#1010f8" stroke-width="5.3" opacity="1"/><line x1="431.6" y1="252" x2="433.3" y2="255" stroke="#1010f8" stroke-width="5.3" opacity="1"/><line x1="450.3" y1="232.5" x2="455.1" y2="241.5" stroke="#1010f8" stroke-width="3.2" opacity="1"/><line x1="457.1" y1="228" x2="461.7" y2="237" stroke="#1010f8" stroke-width="3.2" opacity="1"/><line x1="449.5" y1="231" x2="450.4" y2="232.6" stroke="#000" stroke-width="4"/><line x1="456.3" y1="226.5" x2="457.1" y2="228" stroke="#000" stroke-width="4"/><line x1="369.5" y1="284.5" x2="379.5" y2="302.5" stroke="#18187a" stroke-width="1.2"/><line x1="369.5" y1="284.5" x2="373" y2="291" stroke="#1010c8" stroke-width="2"/><path d="M254.0 166.0 L256.8 164.5 L260.6 162.4 L265.0 159.9 L270.0 157.2 L275.2 154.3 L280.4 151.4 L285.4 148.6 L290.0 146.0 L294.2 143.5 L298.4 141.0 L302.5 138.4 L306.6 135.9 L310.5 133.4 L314.4 131.1 L318.3 128.9 L322.0 127.0 L325.6 125.3 L329.2 124.0 L332.7 122.8 L336.1 121.7 L339.4 120.6 L342.6 119.6 L345.9 118.4 L349.0 117.0 L352.1 115.5 L355.1 113.9 L358.1 112.2 L361.1 110.4 L363.9 108.6 L366.7 106.8 L369.4 104.9 L372.0 103.0 L374.5 101.0 L377.0 98.9 L379.3 96.8 L381.6 94.6 L383.8 92.4 L386.0 90.2 L388.0 88.0 L390.0 86.0 L391.9 84.0 L393.6 81.9 L395.3 79.8 L396.8 77.8 L398.4 75.9 L399.9 74.1 L401.4 72.4 L403.0 71.0 L404.6 69.8 L406.0 68.7 L407.5 67.7 L409.0 66.9 L410.5 66.2 L412.1 65.6 L413.8 65.1 L415.6 64.7 L417.6 64.4 L419.7 64.2 L421.9 64.1 L424.2 64.1 L426.6 64.2 L429.0 64.3 L431.5 64.5 L433.9 64.7 L436.6 64.9 L439.7 65.2 L442.9 65.5 L446.1 65.9 L449.1 66.3 L451.6 66.8 L453.6 67.4 L454.7 68.1 L454.9 68.9 L454.5 69.8 L453.4 70.8 L451.9 71.9 L450.1 73.0 L448.2 74.1 L446.2 75.3 L444.3 76.5 L442.4 77.7 L440.3 79.0 L438.0 80.3 L435.6 81.7 L433.2 83.0 L430.8 84.3 L428.3 85.6 L426.0 86.9 L423.7 88.1 L421.3 89.4 L418.9 90.6 L416.6 91.8 L414.2 92.9 L412.0 94.0 L409.8 95.1 L407.8 96.0 L406.0 96.8 L404.5 97.4 L403.2 98.0 L401.9 98.4 L400.5 98.9 L399.0 99.5 L397.2 100.2 L395.0 101.0 L392.4 102.0 L389.4 103.2 L386.1 104.4 L382.7 105.7 L379.2 107.1 L375.7 108.4 L372.2 109.7 L369.0 111.0 L365.9 112.2 L362.8 113.4 L359.8 114.6 L356.8 115.8 L353.8 117.0 L350.9 118.2 L347.9 119.3 L345.0 120.5 L342.1 121.6 L339.4 122.6 L336.7 123.5 L334.0 124.4 L331.2 125.4 L328.4 126.6 L325.3 127.9 L322.0 129.5 L318.5 131.4 L314.7 133.5 L310.8 135.9 L306.8 138.3 L302.6 140.9 L298.4 143.5 L294.2 146.0 L290.0 148.5 L285.5 151.0 L280.6 153.8 L275.6 156.6 L270.5 159.4 L265.7 162.1 L261.4 164.5 L257.7 166.5 L255.0 168.0" fill="none" stroke="#e030d4" stroke-width="1.0" stroke-linejoin="round" opacity="0.95"/><path d="M549.7 45.2 L548.1 45.6 L545.9 46.0 L543.3 46.6 L540.4 47.2 L537.5 47.9 L534.7 48.7 L532.2 49.5 L530.2 50.4 L528.7 51.4 L527.7 52.5 L526.9 53.6 L526.2 54.9 L525.6 56.1 L524.8 57.3 L523.8 58.5 L522.4 59.5 L520.6 60.4 L518.6 61.3 L516.3 62.1 L514.0 62.8 L511.5 63.6 L509.0 64.3 L506.6 65.1 L504.2 66.0 L501.9 66.9 L499.7 67.9 L497.5 68.9 L495.2 69.9 L492.9 70.9 L490.7 71.9 L488.3 72.9 L485.9 73.9 L483.4 74.9 L480.8 75.9 L478.2 76.9 L475.5 77.9 L472.8 78.9 L470.2 79.8 L467.6 80.8 L465.1 81.7 L462.7 82.5 L460.4 83.3 L458.2 83.9 L456.0 84.6 L453.8 85.3 L451.6 86.1 L449.3 87.1 L446.9 88.2 L444.3 89.5 L441.6 91.1 L438.8 92.7 L436.0 94.5 L433.2 96.2 L430.5 98.0 L428.1 99.7 L426.0 101.2 L424.2 102.6 L422.8 104.0 L421.6 105.2 L420.5 106.5 L419.4 107.7 L418.3 109.0 L417.1 110.3 L415.6 111.6 L413.9 113.0 L411.9 114.5 L409.9 116.1 L407.8 117.6 L405.7 119.1 L403.6 120.6 L401.7 122.0 L400.0 123.3 L398.5 124.4 L397.1 125.5 L395.8 126.4 L394.6 127.3 L393.4 128.2 L392.3 129.1 L391.2 130.0 L390.0 131.0 L388.8 132.1 L387.5 133.4 L386.2 134.7 L384.9 136.0 L383.7 137.2 L382.6 138.4 L381.7 139.3 L381.0 140.0" fill="none" stroke="#e030d4" stroke-width="1.0" stroke-linejoin="round" opacity="0.95"/><path d="M549.7 45.2 L549.0 46.0 L548.2 47.1 L547.2 48.3 L546.1 49.8 L544.9 51.2 L543.5 52.8 L542.1 54.2 L540.6 55.6 L539.0 56.9 L537.2 58.2 L535.2 59.5 L533.2 60.8 L531.1 62.1 L529.1 63.4 L527.0 64.7 L525.0 66.0 L523.1 67.3 L521.2 68.7 L519.3 70.0 L517.4 71.4 L515.4 72.8 L513.5 74.1 L511.5 75.3 L509.4 76.5 L507.2 77.6 L505.0 78.6 L502.7 79.6 L500.4 80.6 L498.1 81.5 L495.7 82.4 L493.4 83.3 L491.1 84.3 L488.8 85.3 L486.6 86.2 L484.4 87.2 L482.2 88.1 L479.9 89.1 L477.6 90.1 L475.3 91.1 L472.9 92.1 L470.4 93.2 L467.7 94.5 L464.9 95.8 L462.1 97.1 L459.4 98.4 L456.7 99.5 L454.3 100.5 L452.1 101.2 L450.2 101.6 L448.5 101.8 L447.0 101.8 L445.6 101.7 L444.2 101.5 L442.9 101.4 L441.5 101.4 L440.0 101.7 L438.4 102.2 L436.7 102.8 L435.1 103.4 L433.4 104.2 L431.7 105.0 L430.0 105.9 L428.5 106.7 L427.0 107.6 L425.6 108.4 L424.1 109.3 L422.7 110.1 L421.4 111.0 L420.2 112.0 L419.0 113.0 L418.0 114.1 L417.2 115.4 L416.6 116.8 L416.3 118.3 L416.1 120.0 L416.1 121.7 L416.0 123.5 L415.9 125.3 L415.7 127.2 L415.2 129.0 L414.5 130.9 L413.7 132.9 L412.9 135.0 L411.9 137.1 L410.9 139.2 L409.8 141.2 L408.6 143.1 L407.4 144.8 L406.1 146.3 L404.7 147.7 L403.2 149.0 L401.6 150.2 L400.1 151.3 L398.5 152.4 L397.1 153.5 L395.7 154.6 L394.5 155.6 L393.4 156.5 L392.5 157.3 L391.5 158.2 L390.5 159.1 L389.4 160.1 L388.2 161.4 L386.7 163.0 L385.0 164.9 L383.0 167.1 L380.9 169.5 L378.6 172.0 L376.4 174.7 L374.1 177.5 L372.0 180.2 L370.0 183.0 L368.2 185.8 L366.5 188.8 L364.9 191.8 L363.3 194.8 L361.8 197.9 L360.2 200.9 L358.5 203.9 L356.7 206.7 L354.8 209.3 L352.8 211.8 L350.8 214.2 L348.8 216.5 L346.7 218.9 L344.5 221.3 L342.3 223.9 L340.0 226.7 L337.6 229.8 L335.0 233.1 L332.4 236.7 L329.7 240.2 L327.0 243.8 L324.5 247.2 L322.1 250.3 L320.0 253.0 L318.1 255.4 L316.3 257.6 L314.6 259.7 L313.0 261.5 L311.6 263.1 L310.4 264.5 L309.3 265.7 L308.5 266.7" fill="none" stroke="#e030d4" stroke-width="1.0" stroke-linejoin="round" opacity="0.95"/><path d="M440.0 113.5 L439.3 113.8 L438.3 114.1 L437.1 114.4 L435.8 114.8 L434.5 115.3 L433.2 115.9 L431.9 116.6 L430.9 117.4 L430.0 118.3 L429.1 119.3 L428.3 120.5 L427.5 121.7 L426.8 123.0 L426.1 124.3 L425.5 125.7 L425.0 127.2 L424.6 128.7 L424.3 130.4 L424.1 132.1 L424.0 133.8 L423.9 135.6 L423.7 137.4 L423.4 139.2 L423.0 140.9 L422.5 142.6 L421.9 144.3 L421.3 146.0 L420.6 147.8 L419.8 149.5 L419.0 151.2 L418.1 152.9 L417.2 154.6 L416.2 156.3 L415.0 158.0 L413.8 159.7 L412.5 161.4 L411.2 163.2 L409.9 164.9 L408.6 166.6 L407.4 168.3 L406.2 170.0 L405.1 171.7 L404.0 173.3 L402.8 175.0 L401.7 176.7 L400.5 178.4 L399.3 180.2 L398.0 182.0 L396.6 183.9 L395.2 185.8 L393.7 187.8 L392.2 189.9 L390.6 191.9 L389.1 193.9 L387.5 196.0 L386.0 198.0 L384.4 200.1 L382.7 202.4 L381.0 204.7 L379.2 207.0 L377.6 209.2 L376.2 211.1 L374.9 212.8 L374.0 214.0" fill="none" stroke="#e030d4" stroke-width="1.0" stroke-linejoin="round" opacity="0.95"/><path d="M465.0 148.0 L465.6 147.4 L466.4 146.6 L467.4 145.7 L468.5 144.6 L469.7 143.5 L470.8 142.3 L472.0 141.2 L473.0 140.0 L474.0 138.9 L474.9 137.8 L475.8 136.7 L476.8 135.6 L477.7 134.4 L478.7 133.0 L479.7 131.6 L480.7 130.0 L481.8 128.2 L482.8 126.1 L483.9 123.9 L484.9 121.5 L486.1 119.2 L487.3 117.0 L488.6 114.9 L490.0 113.0 L491.5 111.4 L493.1 109.9 L494.8 108.6 L496.5 107.3 L498.4 106.1 L500.3 105.0 L502.2 103.8 L504.2 102.5 L506.3 101.2 L508.5 99.9 L510.7 98.5 L513.0 97.2 L515.4 95.9 L517.8 94.6 L520.1 93.3 L522.4 92.1 L524.7 90.9 L526.9 89.7 L529.2 88.6 L531.5 87.5 L533.8 86.4 L536.0 85.2 L538.3 84.1 L540.6 83.0 L543.1 81.7 L545.8 80.3 L548.7 78.7 L551.5 77.2 L554.1 75.9 L556.3 74.8 L558.0 74.1 L558.9 73.9 L559.0 74.3 L558.4 75.1 L557.2 76.4 L555.6 77.9 L553.8 79.5 L551.9 81.2 L550.0 82.9 L548.4 84.3 L546.9 85.6 L545.3 86.8 L543.7 88.1 L542.1 89.3 L540.4 90.6 L538.7 91.9 L537.0 93.3 L535.4 94.7 L533.8 96.2 L532.1 97.8 L530.5 99.5 L528.9 101.2 L527.3 102.9 L525.6 104.6 L524.0 106.2 L522.4 107.7 L520.8 109.1 L519.1 110.4 L517.4 111.7 L515.7 112.9 L514.1 114.1 L512.5 115.4 L510.9 116.7 L509.4 118.1 L508.0 119.7 L506.6 121.3 L505.3 123.1 L504.0 124.9 L502.8 126.6 L501.5 128.3 L500.3 129.8 L499.0 131.2 L497.7 132.4 L496.4 133.4 L495.1 134.3 L493.8 135.2 L492.4 135.9 L491.1 136.6 L489.8 137.3 L488.5 138.0 L487.2 138.6 L485.9 139.1 L484.7 139.6 L483.4 140.1 L482.1 140.5 L480.8 140.9 L479.4 141.4 L478.0 142.0 L476.4 142.7 L474.6 143.5 L472.7 144.4 L470.8 145.2 L469.0 146.1 L467.4 146.9 L466.0 147.5 L465.0 148.0" fill="none" stroke="#e030d4" stroke-width="1.0" stroke-linejoin="round" opacity="0.95"/><path d="M486.0 113.0 L484.5 114.1 L482.5 115.5 L480.1 117.3 L477.5 119.2 L474.8 121.2 L472.2 123.1 L469.9 124.7 L468.0 126.0 L466.5 126.9 L465.4 127.4 L464.4 127.8 L463.5 128.0 L462.7 128.2 L461.9 128.6 L461.1 129.1 L460.0 130.0 L458.8 131.2 L457.6 132.6 L456.2 134.2 L454.9 135.9 L453.5 137.7 L452.2 139.5 L450.8 141.3 L449.5 143.0 L448.2 144.6 L446.9 146.3 L445.6 148.0 L444.2 149.7 L442.9 151.3 L441.6 152.9 L440.3 154.5 L439.0 156.0 L437.7 157.4 L436.5 158.8 L435.2 160.2 L434.0 161.5 L432.7 162.8 L431.4 164.0 L430.0 165.3 L428.6 166.5 L427.1 167.7 L425.6 168.9 L424.0 170.1 L422.4 171.3 L420.8 172.4 L419.1 173.5 L417.4 174.6 L415.6 175.6 L413.7 176.5 L411.8 177.4 L409.8 178.2 L407.7 179.0 L405.7 179.7 L403.7 180.5 L401.8 181.2 L400.0 182.0 L398.3 182.7 L396.7 183.4 L395.2 184.1 L393.8 184.8 L392.3 185.5 L390.9 186.2 L389.5 187.1 L388.0 188.0 L386.5 189.0 L385.0 190.1 L383.4 191.3 L381.9 192.5 L380.4 193.8 L378.9 195.1 L377.4 196.5 L376.0 198.0 L374.7 199.5 L373.4 201.2 L372.1 202.9 L370.9 204.6 L369.7 206.4 L368.5 208.3 L367.2 210.1 L366.0 212.0 L364.8 213.9 L363.5 215.8 L362.3 217.8 L361.1 219.8 L359.9 221.8 L358.6 223.8 L357.3 225.9 L356.0 228.0 L354.6 230.2 L353.1 232.4 L351.6 234.7 L350.1 237.0 L348.6 239.3 L347.0 241.6 L345.5 243.8 L344.0 246.0 L342.4 248.2 L340.7 250.5 L339.0 252.8 L337.2 255.1 L335.6 257.3 L334.2 259.2 L332.9 260.8 L332.0 262.0" fill="none" stroke="#e030d4" stroke-width="1.0" stroke-linejoin="round" opacity="0.95"/><path d="M433.9 130.0 L433.3 130.6 L432.6 131.3 L431.7 132.2 L430.8 133.2 L429.7 134.3 L428.5 135.5 L427.3 136.6 L426.0 137.8 L424.6 139.0 L423.1 140.3 L421.5 141.7 L419.8 143.2 L418.1 144.6 L416.4 145.9 L414.7 147.1 L413.0 148.2 L411.4 149.1 L409.7 149.9 L408.0 150.6 L406.3 151.2 L404.7 151.7 L403.0 152.3 L401.5 152.8 L400.0 153.4 L398.6 154.0 L397.3 154.5 L396.0 155.0 L394.8 155.5 L393.6 156.1 L392.4 156.6 L391.2 157.3 L390.0 158.0 L388.7 158.9 L387.3 159.9 L385.8 161.1 L384.4 162.3 L383.0 163.4 L381.8 164.5 L380.8 165.4 L380.0 166.0" fill="none" stroke="#e030d4" stroke-width="1.0" stroke-linejoin="round" opacity="0.95"/><path d="M591.4 41.3 L590.7 42.4 L589.8 43.8 L588.7 45.4 L587.5 47.3 L586.2 49.3 L584.9 51.4 L583.6 53.5 L582.3 55.6 L581.0 57.7 L579.7 59.9 L578.4 62.2 L577.0 64.5 L575.7 66.9 L574.3 69.2 L573.1 71.6 L571.9 73.9 L570.8 76.2 L569.8 78.5 L568.9 80.7 L568.0 83.0 L567.1 85.3 L566.2 87.6 L565.2 89.8 L564.1 92.1 L562.9 94.4 L561.7 96.7 L560.5 99.0 L559.2 101.4 L557.8 103.7 L556.5 105.9 L555.1 108.1 L553.6 110.3 L552.1 112.4 L550.5 114.6 L548.8 116.8 L547.1 118.9 L545.4 120.9 L543.7 122.8 L542.1 124.5 L540.6 125.9 L539.2 127.0 L537.8 127.7 L536.6 128.2 L535.3 128.5 L534.1 128.9 L532.8 129.3 L531.5 130.0 L530.2 131.0 L528.8 132.3 L527.4 133.9 L525.9 135.6 L524.4 137.5 L522.9 139.4 L521.5 141.5 L520.0 143.5 L518.5 145.6 L517.0 147.7 L515.5 150.0 L514.1 152.4 L512.6 154.8 L511.1 157.3 L509.6 159.6 L508.2 161.8 L506.8 163.9 L505.5 165.8 L504.2 167.6 L503.0 169.4 L501.9 171.1 L500.6 172.6 L499.3 174.1 L497.9 175.6 L496.4 176.9 L494.7 178.1 L492.8 179.2 L490.9 180.3 L488.9 181.2 L486.8 182.1 L484.7 183.0 L482.7 183.8 L480.7 184.7 L478.7 185.6 L476.8 186.4 L474.8 187.1 L472.9 187.9 L470.9 188.6 L469.0 189.4 L467.0 190.3 L465.1 191.2 L463.1 192.2 L461.1 193.3 L459.0 194.4 L457.0 195.5 L455.0 196.7 L453.0 197.9 L451.2 199.1 L449.5 200.3 L447.9 201.5 L446.5 202.8 L445.2 204.1 L443.9 205.4 L442.7 206.7 L441.5 208.1 L440.3 209.4 L439.0 210.7 L437.7 212.0 L436.4 213.2 L435.0 214.5 L433.7 215.7 L432.4 217.0 L431.1 218.3 L429.8 219.7 L428.6 221.1 L427.4 222.5 L426.3 224.0 L425.2 225.4 L424.1 226.9 L423.0 228.5 L421.8 230.2 L420.7 232.1 L419.5 234.2 L418.4 236.5 L417.6 238.9 L416.8 241.5 L416.0 244.2 L414.9 247.1 L413.5 250.0 L411.6 253.0 L409.0 256.0 L405.6 259.1 L401.6 262.3 L396.9 265.5 L392.0 268.9 L386.9 272.3 L381.8 275.7 L377.0 279.2 L372.7 282.7 L368.6 286.4 L364.4 290.5 L360.2 294.8 L356.2 299.0 L352.5 303.0 L349.2 306.7 L346.4 309.7 L344.3 312.0" fill="none" stroke="#e030d4" stroke-width="1.0" stroke-linejoin="round" opacity="0.95"/><path d="M595.3 41.3 L594.6 42.6 L593.7 44.3 L592.6 46.3 L591.3 48.6 L590.0 51.0 L588.7 53.5 L587.4 55.9 L586.2 58.2 L585.1 60.4 L584.0 62.6 L582.8 64.9 L581.7 67.1 L580.6 69.4 L579.5 71.7 L578.3 74.1 L577.1 76.5 L575.9 79.0 L574.6 81.6 L573.3 84.2 L572.0 86.9 L570.7 89.6 L569.3 92.2 L568.0 94.8 L566.7 97.3 L565.4 99.7 L564.1 102.1 L562.8 104.4 L561.5 106.7 L560.2 109.0 L558.9 111.2 L557.6 113.4 L556.3 115.5 L555.0 117.7 L553.7 119.9 L552.4 122.2 L551.0 124.4 L549.7 126.4 L548.4 128.3 L547.1 129.9 L545.8 131.2 L544.5 132.0 L543.2 132.4 L541.9 132.5 L540.6 132.5 L539.3 132.3 L538.0 132.3 L536.7 132.5 L535.4 133.0 L534.1 133.8 L532.8 134.7 L531.5 135.8 L530.2 137.0 L528.9 138.3 L527.6 139.7 L526.3 141.3 L525.0 143.0 L523.7 144.9 L522.4 147.1 L521.1 149.4 L519.8 151.8 L518.5 154.3 L517.2 156.7 L515.9 159.1 L514.6 161.3 L513.3 163.4 L512.1 165.5 L510.8 167.6 L509.6 169.6 L508.3 171.5 L507.0 173.4 L505.6 175.2 L504.2 176.9 L502.7 178.5 L501.2 179.9 L499.7 181.3 L498.1 182.6 L496.5 183.8 L494.8 185.0 L493.0 186.2 L491.1 187.3 L489.1 188.4 L486.8 189.4 L484.5 190.4 L482.2 191.4 L479.8 192.3 L477.4 193.2 L475.1 194.1 L472.9 195.1 L470.8 196.1 L468.8 197.0 L466.7 197.9 L464.8 198.8 L462.8 199.8 L461.0 200.8 L459.1 201.8 L457.3 202.9 L455.5 204.1 L453.8 205.3 L452.1 206.6 L450.5 207.9 L448.9 209.3 L447.3 210.6 L445.8 212.0 L444.3 213.3 L442.9 214.6 L441.5 215.9 L440.2 217.2 L438.9 218.6 L437.7 219.9 L436.4 221.2 L435.2 222.5 L433.9 223.8 L432.6 225.0 L431.3 226.1 L430.1 227.1 L428.8 228.2 L427.5 229.3 L426.2 230.7 L424.8 232.3 L423.4 234.2 L422.1 236.5 L421.0 239.1 L419.9 242.0 L418.8 245.1 L417.5 248.3 L415.8 251.5 L413.7 254.8 L411.0 258.0 L407.6 261.2 L403.5 264.4 L398.9 267.7 L394.0 271.0 L388.9 274.4 L384.0 277.7 L379.3 281.1 L375.0 284.5 L371.0 288.1 L366.8 291.9 L362.8 295.9 L358.9 299.9 L355.3 303.7 L352.1 307.0 L349.4 309.9 L347.3 312.0" fill="none" stroke="#e030d4" stroke-width="1.0" stroke-linejoin="round" opacity="0.95"/><path d="M350.0 215.0 L348.8 216.2 L347.3 217.7 L345.6 219.5 L343.5 221.5 L341.2 223.8 L338.7 226.1 L335.8 228.5 L332.7 231.0 L328.9 233.7 L324.4 236.9 L319.3 240.2 L314.1 243.7 L309.0 246.9 L304.4 249.9 L300.5 252.5 L297.7 254.3" fill="none" stroke="#e030d4" stroke-width="1.0" stroke-linejoin="round" opacity="0.95"/><path d="M297.7 254.3 L298.7 255.3 L300.1 256.8 L301.7 258.6 L303.5 260.5 L305.3 262.4 L306.9 264.2 L308.3 265.7 L309.3 266.7" fill="none" stroke="#e030d4" stroke-width="1.0" stroke-linejoin="round" opacity="0.95"/><path d="M309.3 266.7 L312.0 264.9 L315.6 262.5 L320.0 259.6 L324.7 256.4 L329.7 253.0 L334.5 249.5 L338.9 246.0 L342.7 242.7 L345.8 239.4 L348.6 236.1 L351.2 232.6 L353.5 229.1 L355.8 225.6 L358.0 222.3 L360.3 219.0 L362.7 216.0 L365.2 213.2 L367.5 210.5 L369.9 207.9 L372.3 205.4 L374.7 203.0 L377.2 200.6 L379.9 198.3 L382.7 196.0 L385.7 193.7 L389.0 191.5 L392.4 189.3 L395.8 187.2 L399.3 185.2 L402.8 183.2 L406.1 181.2 L409.3 179.3 L412.5 177.4 L415.8 175.4 L419.1 173.5 L422.3 171.6 L425.3 169.9 L428.0 168.3 L430.3 167.0 L432.0 166.0" fill="none" stroke="#e030d4" stroke-width="1.0" stroke-linejoin="round" opacity="0.95"/><path d="M309.3 312.0 L311.1 310.0 L313.5 307.4 L316.4 304.3 L319.5 300.9 L322.9 297.2 L326.3 293.4 L329.6 289.6 L332.7 286.0 L335.6 282.4 L338.6 278.8 L341.6 275.0 L344.6 271.2 L347.5 267.4 L350.4 263.6 L353.2 259.8 L356.0 256.0 L358.7 252.2 L361.3 248.3 L363.8 244.4 L366.3 240.5 L368.8 236.7 L371.2 232.9 L373.6 229.4 L376.0 226.0 L378.5 222.7 L381.1 219.4 L383.7 216.2 L386.2 213.1 L388.7 210.3 L390.8 207.8 L392.6 205.6 L394.0 204.0" fill="none" stroke="#e030d4" stroke-width="1.0" stroke-linejoin="round" opacity="0.95"/><path d="M400.0 99.9 L400.5 99.6 L401.2 99.3 L401.9 99.0 L402.8 98.5 L403.8 98.0 L404.9 97.4 L406.3 96.8 L407.8 96.0 L409.6 95.1 L411.6 94.1 L413.9 93.0 L416.2 91.9 L418.7 90.6 L421.2 89.4 L423.6 88.1 L426.0 86.9 L428.3 85.6 L430.8 84.3 L433.2 83.0 L435.6 81.7 L438.0 80.3 L440.3 79.0 L442.4 77.7 L444.3 76.5 L446.0 75.3 L447.7 74.1 L449.2 72.8 L450.6 71.7 L451.9 70.5 L453.0 69.6 L454.0 68.7 L454.7 68.1" fill="none" stroke="#e030d4" stroke-width="1.0" stroke-linejoin="round" opacity="0.95"/><path d="M254.5 167.0 L257.3 165.5 L261.0 163.4 L265.4 160.9 L270.2 158.2 L275.4 155.3 L280.5 152.4 L285.5 149.6 L290.0 147.0 L294.3 144.5 L298.6 141.9 L302.9 139.3 L307.1 136.7 L311.2 134.2 L315.1 131.9 L318.7 129.8 L322.0 128.0 L325.0 126.5 L327.9 125.2 L330.6 124.2 L333.0 123.3 L335.2 122.6 L337.1 122.0 L338.7 121.5 L340.0 121.0" fill="none" stroke="#cc40bc" stroke-width="1.8" stroke-linejoin="round" opacity="0.85"/><ellipse cx="520" cy="271.5" rx="25.5" ry="6.5" transform="rotate(-37 520 271.5)" fill="none" stroke="#c4dcd8" stroke-width=".95"/><path d="M405.2 92.1 L405.6 90.4 L406.3 88.3 L407.1 85.8 L408.1 83.2 L409.2 80.6 L410.4 78.1 L411.7 75.8 L413.0 73.9 L414.4 72.3 L415.8 70.8 L417.4 69.6 L419.0 68.4 L420.7 67.4 L422.4 66.4 L424.2 65.5 L426.0 64.7 L427.9 63.9 L430.0 63.1 L432.2 62.4 L434.3 61.9 L436.5 61.4 L438.4 61.0 L440.2 60.8 L441.7 60.8 L442.9 61.0 L444.0 61.3 L445.0 61.9 L445.8 62.5 L446.4 63.3 L446.8 64.1 L446.9 65.0 L446.9 66.0 L446.6 67.1 L445.9 68.3 L445.0 69.6 L443.9 70.9 L442.7 72.3 L441.5 73.8 L440.2 75.2 L439.0 76.5 L437.8 77.8 L436.6 79.1 L435.4 80.5 L434.1 81.8 L432.8 83.1 L431.4 84.4 L430.0 85.7 L428.6 86.9 L427.1 88.2 L425.4 89.4 L423.7 90.8 L421.9 92.0 L420.2 93.2 L418.5 94.3 L417.0 95.2 L415.6 96.0 L414.3 96.6 L413.2 97.0 L412.1 97.3 L411.1 97.5 L410.1 97.6 L409.3 97.6 L408.5 97.5 L407.8 97.3 L407.2 97.0 L406.5 96.8 L406.0 96.4 L405.5 95.9 L405.2 95.3 L405.0 94.5 L405.0 93.4Z" fill="none" stroke="#c4dcd8" stroke-width="0.95" stroke-linejoin="round" opacity="0.95"/><path d="M371.0 153.6 L371.4 152.8 L372.1 151.7 L373.1 150.5 L374.3 149.2 L375.6 147.8 L377.1 146.5 L378.5 145.2 L380.0 144.0 L381.5 142.9 L383.2 141.8 L385.0 140.8 L386.8 139.7 L388.7 138.7 L390.6 137.8 L392.3 136.8 L394.0 136.0 L395.7 135.1 L397.4 134.3 L399.2 133.4 L400.8 132.6 L402.4 131.9 L403.7 131.3 L404.8 131.0 L405.5 131.0 L405.9 131.3 L405.9 131.8 L405.7 132.6 L405.3 133.6 L404.7 134.6 L404.0 135.8 L403.0 136.9 L402.0 138.0 L400.7 139.1 L399.2 140.4 L397.4 141.7 L395.5 143.0 L393.6 144.3 L391.6 145.6 L389.7 146.9 L388.0 148.0 L386.4 149.1 L384.7 150.2 L383.0 151.2 L381.4 152.2 L379.9 153.1 L378.5 153.9 L377.2 154.5 L376.0 155.0 L374.9 155.3 L373.9 155.4 L373.0 155.5 L372.2 155.3 L371.5 155.1 L371.1 154.7 L370.9 154.2Z" fill="none" stroke="#c4dcd8" stroke-width="0.95" stroke-linejoin="round" opacity="0.95"/><path d="M299.9 232.6 L300.1 232.4 L300.4 232.1 L300.8 231.8 L301.3 231.5 L301.8 231.2 L302.3 230.9 L302.8 230.6 L303.2 230.4 L303.6 230.2 L304.1 230.0 L304.6 229.8 L305.1 229.6 L305.6 229.4 L306.0 229.3 L306.3 229.3 L306.5 229.3 L306.6 229.4 L306.6 229.6 L306.6 229.9 L306.4 230.2 L306.2 230.5 L306.0 230.9 L305.7 231.2 L305.4 231.5 L305.0 231.8 L304.5 232.1 L303.8 232.5 L303.2 232.8 L302.6 233.1 L301.9 233.4 L301.4 233.6 L301.0 233.7 L300.7 233.7 L300.4 233.7 L300.2 233.6 L300.0 233.4 L299.8 233.2 L299.8 233.0 L299.8 232.8Z" fill="none" stroke="#c4dcd8" stroke-width="0.95" stroke-linejoin="round" opacity="0.95"/><path d="M465.0 105.0 L465.6 104.2 L466.6 103.2 L467.8 102.1 L469.3 100.9 L471.0 99.7 L472.7 98.5 L474.4 97.2 L476.0 96.0 L477.6 94.8 L479.3 93.6 L481.0 92.3 L482.8 91.1 L484.5 89.8 L486.4 88.5 L488.2 87.3 L490.0 86.0 L491.8 84.7 L493.7 83.5 L495.6 82.2 L497.4 80.9 L499.3 79.6 L501.2 78.4 L503.1 77.2 L505.0 76.0 L506.9 74.9 L508.9 73.7 L511.0 72.6 L513.0 71.5 L514.9 70.5 L516.8 69.5 L518.5 68.7 L520.0 68.0 L521.4 67.4 L522.7 66.8 L524.0 66.4 L525.1 66.0 L526.0 65.8 L526.8 65.7 L527.3 65.7 L527.6 66.0 L527.6 66.5 L527.3 67.2 L526.8 68.2 L526.2 69.2 L525.3 70.4 L524.3 71.6 L523.2 72.8 L522.0 74.0 L520.7 75.2 L519.1 76.4 L517.4 77.6 L515.5 78.9 L513.6 80.2 L511.7 81.5 L509.8 82.7 L508.0 84.0 L506.2 85.3 L504.5 86.5 L502.8 87.8 L501.0 89.1 L499.2 90.3 L497.5 91.6 L495.8 92.8 L494.0 94.0 L492.2 95.2 L490.4 96.4 L488.6 97.6 L486.8 98.8 L485.0 100.0 L483.2 101.1 L481.6 102.1 L480.0 103.0 L478.5 103.9 L477.1 104.7 L475.7 105.5 L474.4 106.2 L473.2 106.9 L472.1 107.4 L471.0 107.8 L470.0 108.0 L469.0 108.0 L468.0 108.0 L467.1 107.7 L466.2 107.4 L465.5 106.9 L465.0 106.4 L464.8 105.7Z" fill="none" stroke="#c4dcd8" stroke-width="0.95" stroke-linejoin="round" opacity="0.95"/><path d="M530.2 110.3 L530.3 109.0 L530.6 107.5 L531.2 105.8 L531.8 104.0 L532.6 102.1 L533.5 100.4 L534.4 98.7 L535.4 97.3 L536.4 96.1 L537.5 95.0 L538.7 93.9 L539.9 93.0 L541.3 92.1 L542.7 91.2 L544.2 90.4 L545.8 89.5 L547.6 88.6 L549.6 87.7 L551.8 86.7 L554.0 85.8 L556.1 85.0 L558.2 84.2 L560.0 83.6 L561.5 83.0 L562.7 82.5 L563.7 82.0 L564.6 81.6 L565.3 81.3 L565.8 81.1 L566.2 81.1 L566.5 81.3 L566.7 81.7 L566.8 82.4 L566.7 83.5 L566.5 84.7 L566.2 86.2 L565.7 87.7 L565.2 89.2 L564.6 90.7 L564.0 92.1 L563.3 93.4 L562.5 94.8 L561.6 96.1 L560.6 97.5 L559.6 98.8 L558.5 100.1 L557.4 101.3 L556.3 102.5 L555.1 103.6 L553.9 104.7 L552.6 105.7 L551.2 106.7 L549.9 107.7 L548.5 108.6 L547.1 109.5 L545.8 110.3 L544.5 111.1 L543.1 112.0 L541.7 112.9 L540.3 113.7 L538.9 114.4 L537.6 115.0 L536.5 115.4 L535.4 115.5 L534.4 115.4 L533.5 115.1 L532.6 114.7 L531.8 114.0 L531.2 113.3 L530.6 112.4 L530.3 111.4Z" fill="none" stroke="#c4dcd8" stroke-width="0.95" stroke-linejoin="round" opacity="0.95"/><path d="M532.8 131.2 L533.2 130.0 L533.9 128.6 L534.7 126.9 L535.7 125.1 L536.8 123.3 L538.0 121.4 L539.3 119.7 L540.6 118.1 L542.0 116.6 L543.5 115.2 L545.1 113.7 L546.8 112.3 L548.5 111.0 L550.2 109.8 L551.9 108.7 L553.6 107.7 L555.3 106.8 L557.1 106.1 L558.9 105.4 L560.6 104.8 L562.4 104.3 L564.0 104.0 L565.4 103.8 L566.7 103.8 L567.8 104.0 L568.8 104.4 L569.7 104.9 L570.4 105.6 L571.1 106.4 L571.5 107.2 L571.8 108.1 L571.9 109.0 L571.8 109.9 L571.5 111.0 L570.9 112.1 L570.3 113.2 L569.5 114.4 L568.6 115.6 L567.7 116.9 L566.7 118.1 L565.7 119.4 L564.5 120.7 L563.3 122.1 L562.0 123.5 L560.6 124.9 L559.2 126.2 L557.8 127.4 L556.3 128.5 L554.8 129.4 L553.1 130.3 L551.4 131.1 L549.6 131.8 L547.8 132.4 L546.2 133.0 L544.6 133.4 L543.2 133.8 L541.9 134.1 L540.8 134.2 L539.7 134.3 L538.6 134.3 L537.7 134.2 L536.9 134.1 L536.1 134.0 L535.4 133.8 L534.8 133.7 L534.1 133.6 L533.6 133.5 L533.1 133.3 L532.8 133.1 L532.6 132.6 L532.6 132.0Z" fill="none" stroke="#c4dcd8" stroke-width="0.95" stroke-linejoin="round" opacity="0.95"/><path d="M428.6 141.6 L429.1 140.4 L429.8 138.9 L430.7 137.2 L431.7 135.5 L432.9 133.6 L434.1 131.8 L435.3 130.1 L436.5 128.5 L437.7 127.1 L438.9 125.6 L440.1 124.3 L441.4 123.0 L442.7 121.7 L444.1 120.5 L445.5 119.3 L446.9 118.1 L448.5 116.9 L450.1 115.7 L451.9 114.5 L453.7 113.4 L455.5 112.3 L457.1 111.5 L458.6 110.8 L459.9 110.3 L461.0 110.1 L462.1 110.0 L463.0 110.2 L463.8 110.5 L464.4 110.9 L464.9 111.5 L465.1 112.1 L465.1 112.9 L464.7 113.8 L464.1 114.9 L463.1 116.1 L462.0 117.4 L460.8 118.9 L459.6 120.3 L458.4 121.8 L457.3 123.3 L456.3 124.8 L455.4 126.5 L454.5 128.2 L453.6 130.0 L452.6 131.8 L451.6 133.4 L450.6 135.0 L449.5 136.4 L448.3 137.7 L447.0 138.9 L445.6 140.0 L444.2 141.0 L442.9 142.0 L441.5 142.8 L440.2 143.6 L439.0 144.2 L437.9 144.7 L436.7 145.1 L435.6 145.4 L434.6 145.6 L433.6 145.7 L432.7 145.7 L431.9 145.6 L431.2 145.5 L430.6 145.3 L429.9 145.1 L429.4 144.8 L428.9 144.4 L428.6 144.0 L428.4 143.3 L428.4 142.6Z" fill="none" stroke="#c4dcd8" stroke-width="0.95" stroke-linejoin="round" opacity="0.95"/><path d="M465.1 169.0 L465.5 168.0 L465.9 166.8 L466.4 165.6 L467.1 164.3 L467.7 162.9 L468.5 161.5 L469.4 160.1 L470.3 158.6 L471.4 157.1 L472.6 155.4 L473.9 153.7 L475.3 151.9 L476.8 150.2 L478.2 148.5 L479.5 147.0 L480.7 145.6 L481.8 144.3 L482.9 143.0 L483.9 141.8 L484.8 140.7 L485.8 139.7 L486.7 138.9 L487.6 138.2 L488.5 137.8 L489.4 137.7 L490.3 138.0 L491.1 138.6 L492.0 139.3 L492.8 140.0 L493.6 140.4 L494.3 140.6 L495.0 140.3 L495.6 139.5 L496.1 138.3 L496.5 136.9 L496.9 135.2 L497.3 133.5 L497.8 131.7 L498.3 130.0 L499.0 128.5 L499.8 127.1 L500.7 125.6 L501.8 124.1 L502.8 122.6 L503.9 121.3 L504.9 120.0 L505.9 119.0 L506.8 118.1 L507.6 117.4 L508.5 116.9 L509.3 116.5 L510.1 116.2 L510.7 116.1 L511.3 116.2 L511.7 116.4 L512.0 116.8 L512.1 117.4 L512.0 118.3 L511.7 119.4 L511.3 120.6 L510.9 121.9 L510.4 123.3 L509.9 124.6 L509.4 125.9 L508.9 127.2 L508.3 128.5 L507.6 130.0 L506.9 131.4 L506.2 132.8 L505.5 134.1 L504.8 135.3 L504.2 136.4 L503.6 137.3 L503.1 138.0 L502.5 138.6 L502.0 139.1 L501.5 139.7 L501.1 140.3 L500.7 141.1 L500.3 142.0 L500.0 143.2 L499.9 144.5 L499.8 145.9 L499.7 147.4 L499.7 148.9 L499.5 150.5 L499.3 152.0 L499.0 153.4 L498.6 154.8 L498.0 156.2 L497.5 157.5 L496.8 158.9 L496.1 160.2 L495.4 161.5 L494.6 162.7 L493.8 163.9 L493.0 165.0 L492.1 166.0 L491.1 167.0 L490.2 168.0 L489.2 168.9 L488.1 169.8 L487.0 170.7 L485.9 171.7 L484.7 172.7 L483.4 173.8 L482.0 174.9 L480.6 176.0 L479.2 177.1 L477.9 178.0 L476.6 178.8 L475.5 179.5 L474.5 180.0 L473.5 180.5 L472.7 180.8 L471.8 181.0 L471.1 181.2 L470.4 181.2 L469.7 181.1 L469.0 180.8 L468.4 180.4 L467.8 179.7 L467.2 178.9 L466.6 178.0 L466.2 177.0 L465.7 176.0 L465.4 175.1 L465.1 174.3 L464.9 173.6 L464.7 173.0 L464.6 172.4 L464.5 171.9 L464.5 171.3 L464.6 170.7 L464.8 169.9Z" fill="none" stroke="#c4dcd8" stroke-width="0.95" stroke-linejoin="round" opacity="0.95"/><path d="M482.0 118.1 L482.1 117.5 L482.4 116.6 L482.9 115.4 L483.5 114.1 L484.3 112.7 L485.3 111.4 L486.2 110.1 L487.2 109.0 L488.3 108.0 L489.5 107.1 L490.9 106.1 L492.4 105.3 L493.8 104.4 L495.2 103.7 L496.5 103.0 L497.7 102.5 L498.8 102.0 L499.9 101.6 L500.9 101.3 L501.9 101.0 L502.8 100.9 L503.5 100.9 L504.0 101.0 L504.2 101.2 L504.1 101.6 L503.8 102.2 L503.3 103.0 L502.7 103.9 L501.9 104.8 L500.9 105.8 L500.0 106.8 L499.0 107.7 L497.9 108.6 L496.7 109.7 L495.3 110.8 L493.8 111.8 L492.4 112.9 L491.0 113.9 L489.7 114.8 L488.5 115.5 L487.4 116.2 L486.3 116.8 L485.3 117.4 L484.3 117.9 L483.4 118.2 L482.7 118.4 L482.2 118.4Z" fill="none" stroke="#c4dcd8" stroke-width="0.95" stroke-linejoin="round" opacity="0.95"/><path d="M372.5 172.1 L373.6 175.4 L371.4 180.9 L372.5 187.5 L367.0 196.3 L362.6 202.9 L356.0 209.5 L349.4 216.1 L346.1 221.6 L348.3 226.0 L349.4 230.4 L343.9 234.8 L334.0 238.1 L324.1 242.5 L326.3 237.0 L330.7 229.3 L335.1 221.6 L337.3 216.1 L342.8 211.7 L341.7 209.5 L334.0 212.8 L337.3 207.3 L342.8 200.7 L348.3 193.0 L354.9 185.3 L362.6 178.7 L368.1 174.3Z" fill="none" stroke="#c4dcd8" stroke-width=".95" stroke-linejoin="round" opacity=".95"/><path d="M419.5 86.9 L419.8 86.2 L420.4 85.1 L421.1 83.9 L422.0 82.6 L423.0 81.2 L424.0 79.9 L425.0 78.8 L426.0 77.8 L427.0 77.0 L428.1 76.2 L429.3 75.5 L430.5 74.9 L431.7 74.4 L432.6 74.0 L433.4 73.9 L433.9 73.9 L434.1 74.2 L434.1 74.8 L433.9 75.6 L433.5 76.5 L433.1 77.5 L432.5 78.5 L431.9 79.5 L431.2 80.4 L430.4 81.3 L429.5 82.2 L428.5 83.1 L427.4 84.1 L426.3 84.9 L425.2 85.7 L424.2 86.4 L423.4 86.9 L422.7 87.3 L421.9 87.6 L421.2 87.8 L420.6 87.9 L420.0 87.9 L419.7 87.7 L419.5 87.4Z" fill="none" stroke="#3a9ae6" stroke-width="0.9" stroke-linejoin="round" opacity="0.95"/><path d="M411.7 74.5 L411.7 74.3 L411.9 74.1 L412.2 73.8 L412.5 73.5 L412.9 73.2 L413.3 72.9 L413.6 72.7 L414.0 72.5 L414.4 72.4 L414.8 72.3 L415.3 72.3 L415.7 72.3 L416.2 72.3 L416.5 72.4 L416.8 72.5 L416.9 72.6 L416.9 72.8 L416.7 73.1 L416.4 73.5 L416.1 73.8 L415.7 74.2 L415.3 74.5 L414.9 74.8 L414.5 75.0 L414.1 75.1 L413.7 75.1 L413.3 75.1 L412.8 75.0 L412.4 74.9 L412.1 74.8 L411.8 74.7Z" fill="none" stroke="#3a9ae6" stroke-width="0.9" stroke-linejoin="round" opacity="0.95"/><path d="M470.3 103.8 L470.7 103.2 L471.4 102.4 L472.3 101.4 L473.3 100.3 L474.5 99.2 L475.6 98.0 L476.8 97.0 L478.0 96.0 L479.3 95.0 L480.8 94.0 L482.4 92.9 L484.1 91.9 L485.6 90.9 L486.9 90.2 L487.9 89.7 L488.5 89.5 L488.6 89.7 L488.4 90.2 L487.9 90.9 L487.2 91.9 L486.3 92.9 L485.3 94.0 L484.3 95.0 L483.3 96.0 L482.2 97.0 L480.9 98.0 L479.5 99.2 L478.0 100.3 L476.5 101.4 L475.2 102.4 L474.0 103.2 L473.0 103.8 L472.2 104.2 L471.5 104.5 L471.0 104.7 L470.5 104.8 L470.2 104.7 L470.1 104.5 L470.1 104.2Z" fill="none" stroke="#3a9ae6" stroke-width="0.9" stroke-linejoin="round" opacity="0.95"/><path d="M538.0 105.0 L537.9 104.3 L538.1 103.2 L538.6 101.8 L539.3 100.2 L540.2 98.7 L541.2 97.1 L542.2 95.8 L543.2 94.7 L544.3 93.8 L545.6 93.1 L547.1 92.4 L548.6 91.8 L550.1 91.3 L551.5 91.0 L552.7 90.8 L553.6 90.8 L554.3 91.0 L554.8 91.4 L555.1 92.0 L555.4 92.8 L555.5 93.6 L555.4 94.4 L555.3 95.2 L555.0 96.0 L554.6 96.8 L554.0 97.6 L553.3 98.5 L552.4 99.4 L551.5 100.3 L550.5 101.1 L549.5 101.9 L548.4 102.5 L547.2 103.1 L545.7 103.7 L544.1 104.3 L542.5 104.8 L540.9 105.2 L539.6 105.4 L538.6 105.3Z" fill="none" stroke="#3a9ae6" stroke-width="0.9" stroke-linejoin="round" opacity="0.95"/><path d="M541.9 127.2 L542.1 126.3 L542.6 125.1 L543.3 123.7 L544.2 122.2 L545.2 120.7 L546.2 119.2 L547.3 117.9 L548.4 116.8 L549.6 115.8 L550.9 115.0 L552.3 114.1 L553.8 113.4 L555.3 112.8 L556.6 112.2 L557.9 111.8 L558.9 111.6 L559.8 111.5 L560.6 111.5 L561.3 111.7 L561.9 112.0 L562.4 112.4 L562.7 112.9 L562.9 113.5 L562.8 114.2 L562.5 115.1 L562.0 116.1 L561.2 117.3 L560.4 118.6 L559.4 119.9 L558.4 121.1 L557.3 122.3 L556.3 123.3 L555.3 124.2 L554.1 125.0 L552.9 125.8 L551.6 126.5 L550.4 127.2 L549.2 127.7 L548.1 128.2 L547.1 128.5 L546.2 128.7 L545.2 128.8 L544.3 128.9 L543.5 128.8 L542.8 128.6 L542.3 128.3 L542.0 127.8Z" fill="none" stroke="#3a9ae6" stroke-width="0.9" stroke-linejoin="round" opacity="0.95"/><path d="M437.8 137.7 L437.9 137.0 L438.2 136.1 L438.6 135.0 L439.1 133.8 L439.7 132.7 L440.4 131.6 L441.0 130.6 L441.7 129.8 L442.4 129.2 L443.3 128.6 L444.3 128.0 L445.3 127.6 L446.2 127.3 L447.1 127.1 L447.7 127.0 L448.2 127.2 L448.4 127.6 L448.5 128.2 L448.5 129.1 L448.3 130.0 L448.0 131.0 L447.7 132.0 L447.3 133.0 L446.9 133.8 L446.4 134.6 L445.8 135.4 L445.2 136.1 L444.5 136.9 L443.7 137.6 L443.0 138.2 L442.3 138.7 L441.7 139.0 L441.1 139.2 L440.5 139.3 L439.8 139.3 L439.2 139.2 L438.6 139.0 L438.2 138.6 L437.9 138.2Z" fill="none" stroke="#3a9ae6" stroke-width="0.9" stroke-linejoin="round" opacity="0.95"/><path d="M479.0 152.0 L479.0 151.2 L479.1 150.2 L479.3 149.3 L479.6 148.2 L479.9 147.3 L480.2 146.4 L480.6 145.6 L481.0 145.0 L481.5 144.5 L482.1 144.2 L482.8 143.9 L483.5 143.7 L484.2 143.6 L484.9 143.6 L485.5 143.7 L486.0 144.0 L486.4 144.4 L486.8 145.0 L487.2 145.7 L487.5 146.6 L487.7 147.4 L487.9 148.3 L488.0 149.2 L488.0 150.0 L487.9 150.8 L487.6 151.6 L487.3 152.5 L486.9 153.3 L486.4 154.1 L485.9 154.9 L485.5 155.5 L485.0 156.0 L484.5 156.4 L484.0 156.7 L483.5 157.0 L482.9 157.2 L482.4 157.3 L481.9 157.3 L481.4 157.2 L481.0 157.0 L480.6 156.7 L480.3 156.2 L479.9 155.7 L479.6 155.0 L479.4 154.3 L479.2 153.5 L479.0 152.8Z" fill="none" stroke="#3a9ae6" stroke-width="0.9" stroke-linejoin="round" opacity="0.95"/><line x1="268.1" y1="163.25" x2="269.0" y2="164.75" stroke="#ffe400" stroke-width="1.74"/><line x1="292.2" y1="205.25" x2="293.0" y2="206.75" stroke="#ffe400" stroke-width="1.74"/><line x1="297.4" y1="214.25" x2="298.3" y2="215.75" stroke="#ffe400" stroke-width="1.74"/><line x1="304.3" y1="227.0" x2="305.5" y2="229.0" stroke="#ffe400" stroke-width="2.668" opacity="1"/><line x1="311.5" y1="238.25" x2="312.4" y2="239.75" stroke="#ffe400" stroke-width="1.74"/><line x1="315.3" y1="245.7" x2="316.4" y2="247.7" stroke="#ff40e0" stroke-width="2.668" opacity="1"/><line x1="332.6" y1="274.25" x2="333.4" y2="275.75" stroke="#ffe400" stroke-width="1.74"/><line x1="337.2" y1="282.25" x2="338.1" y2="283.75" stroke="#ffe400" stroke-width="1.74"/><line x1="350.0" y1="305.0" x2="351.2" y2="307.0" stroke="#ff2020" stroke-width="2.668" opacity="1"/><line x1="253.0" y1="74.0" x2="254.1" y2="76.0" stroke="#ffe400" stroke-width="3.8640000000000003" opacity="1"/><line x1="257.1" y1="81.45" x2="258.5" y2="83.95" stroke="#ff2020" stroke-width="3.8640000000000003" opacity="1"/><line x1="269.8" y1="102.8" x2="270.3" y2="103.8" stroke="#ffe400" stroke-width="2.52"/><line x1="288.1" y1="135.95" x2="288.9" y2="137.45" stroke="#ffe400" stroke-width="2.52"/><line x1="293.4" y1="147.05" x2="294.7" y2="149.55" stroke="#ffa000" stroke-width="3.8640000000000003" opacity="1"/><line x1="304.3" y1="165.25" x2="305.1" y2="166.75" stroke="#ffe400" stroke-width="2.52"/><line x1="309.0" y1="175.45" x2="310.4" y2="177.95" stroke="#ff2020" stroke-width="3.8640000000000003" opacity="1"/><line x1="312.0" y1="179.25" x2="312.8" y2="180.75" stroke="#ffa000" stroke-width="2.52"/><line x1="328.6" y1="209.25" x2="329.4" y2="210.75" stroke="#ffe400" stroke-width="2.52"/><line x1="336.9" y1="225.7" x2="338.0" y2="227.7" stroke="#ffa000" stroke-width="3.8640000000000003" opacity="1"/><line x1="350.8" y1="249.25" x2="351.6" y2="250.75" stroke="#ffe400" stroke-width="2.52"/><line x1="359.1" y1="264.25" x2="359.9" y2="265.75" stroke="#ffe400" stroke-width="2.52"/><line x1="365.3" y1="277.0" x2="366.4" y2="279.0" stroke="#ffa000" stroke-width="3.8640000000000003" opacity="1"/><line x1="289.2" y1="70.7" x2="290.4" y2="72.7" stroke="#ffe400" stroke-width="4.416" opacity="1"/><line x1="321.3" y1="126.3" x2="322.4" y2="128.3" stroke="#ffe400" stroke-width="4.416" opacity="1"/><line x1="340.2" y1="157.25" x2="341.0" y2="158.75" stroke="#ffe400" stroke-width="2.88"/><line x1="354.6" y1="183.75" x2="356.0" y2="186.25" stroke="#ffe400" stroke-width="4.416" opacity="1"/><line x1="359.3" y1="190.25" x2="360.2" y2="191.75" stroke="#ffe400" stroke-width="2.88"/><line x1="361.4" y1="195.45" x2="362.8" y2="197.95" stroke="#ff40e0" stroke-width="4.416" opacity="1"/><line x1="373.4" y1="215.95" x2="374.2" y2="217.45" stroke="#ffe400" stroke-width="2.88"/><line x1="381.3" y1="230.95" x2="382.1" y2="232.45" stroke="#ffe400" stroke-width="2.88"/><line x1="384.6" y1="239.0" x2="385.6" y2="241.0" stroke="#ffa000" stroke-width="4.416" opacity="1"/><line x1="399.3" y1="267.0" x2="400.4" y2="269.0" stroke="#ffe400" stroke-width="4.416" opacity="1"/><line x1="332.9" y1="125.0" x2="334.0" y2="127.0" stroke="#ff40e0" stroke-width="2.576" opacity="1"/><line x1="359.7" y1="172.0" x2="361.0" y2="174.0" stroke="#ffe400" stroke-width="2.576" opacity="1"/><line x1="368.4" y1="186.0" x2="369.6" y2="188.0" stroke="#ffa000" stroke-width="2.576" opacity="1"/><line x1="375.2" y1="196.25" x2="376.2" y2="197.75" stroke="#ffe400" stroke-width="1.68"/><line x1="382.4" y1="208.0" x2="383.7" y2="210.0" stroke="#ff40e0" stroke-width="2.576" opacity="1"/><line x1="329.5" y1="76.55" x2="331.5" y2="80.05" stroke="#ffa000" stroke-width="4.876" opacity="1"/><line x1="359.8" y1="128.3" x2="361.0" y2="130.3" stroke="#ffe400" stroke-width="4.876" opacity="1"/><line x1="381.1" y1="164.0" x2="382.3" y2="166.0" stroke="#ffe400" stroke-width="4.876" opacity="1"/><line x1="396.8" y1="190.45" x2="398.3" y2="192.95" stroke="#ff40e0" stroke-width="4.876" opacity="1"/><line x1="398.9" y1="194.0" x2="400.1" y2="196.0" stroke="#ffa000" stroke-width="4.876" opacity="1"/><line x1="401.3" y1="198.0" x2="402.5" y2="200.0" stroke="#ffe400" stroke-width="4.876" opacity="1"/><line x1="406.3" y1="206.75" x2="407.7" y2="209.25" stroke="#ff2020" stroke-width="4.876" opacity="1"/><line x1="408.4" y1="210.5" x2="410.1" y2="213.5" stroke="#ffa000" stroke-width="4.876" opacity="1"/><line x1="424.3" y1="239.0" x2="425.4" y2="241.0" stroke="#ffa000" stroke-width="4.876" opacity="1"/><line x1="361.1" y1="65.25" x2="361.9" y2="66.75" stroke="#ffe400" stroke-width="1.92"/><line x1="364.2" y1="72.3" x2="365.3" y2="74.3" stroke="#ffa000" stroke-width="2.9440000000000004" opacity="1"/><line x1="366.9" y1="77.3" x2="367.9" y2="79.3" stroke="#ff2020" stroke-width="2.9440000000000004" opacity="1"/><line x1="372.6" y1="88.0" x2="374.7" y2="92.0" stroke="#ffe400" stroke-width="2.9440000000000004" opacity="1"/><line x1="380.2" y1="102.3" x2="381.3" y2="104.3" stroke="#ff2020" stroke-width="2.9440000000000004" opacity="1"/><line x1="390.2" y1="120.7" x2="391.3" y2="122.7" stroke="#ffe400" stroke-width="2.9440000000000004" opacity="1"/><line x1="396.4" y1="132.3" x2="397.5" y2="134.3" stroke="#ffe400" stroke-width="2.9440000000000004" opacity="1"/><line x1="400.8" y1="139.25" x2="401.6" y2="140.75" stroke="#ffe400" stroke-width="1.92"/><line x1="421.4" y1="177.25" x2="422.2" y2="178.75" stroke="#ffe400" stroke-width="1.92"/><line x1="425.4" y1="186.0" x2="427.6" y2="190.0" stroke="#ffa000" stroke-width="2.9440000000000004" opacity="1"/><line x1="362.0" y1="61.25" x2="362.8" y2="62.75" stroke="#ffe400" stroke-width="1.92"/><line x1="365.7" y1="69.0" x2="366.8" y2="71.0" stroke="#ffe400" stroke-width="2.9440000000000004" opacity="1"/><line x1="373.4" y1="82.75" x2="374.8" y2="85.25" stroke="#ffa000" stroke-width="2.9440000000000004" opacity="1"/><line x1="388.4" y1="109.0" x2="389.5" y2="111.0" stroke="#ffe400" stroke-width="2.9440000000000004" opacity="1"/><line x1="399.1" y1="127.0" x2="400.3" y2="129.0" stroke="#ffe400" stroke-width="2.9440000000000004" opacity="1"/><line x1="404.4" y1="136.0" x2="405.6" y2="138.0" stroke="#ffa000" stroke-width="2.9440000000000004" opacity="1"/><line x1="411.2" y1="146.25" x2="412.1" y2="147.75" stroke="#ffe400" stroke-width="1.92"/><line x1="439.1" y1="193.25" x2="440.0" y2="194.75" stroke="#ff2020" stroke-width="1.92"/><line x1="450.4" y1="215.2" x2="452.0" y2="218.2" stroke="#ffa000" stroke-width="2.9440000000000004" opacity="1"/><line x1="398.5" y1="60.45" x2="399.9" y2="62.95" stroke="#ffe400" stroke-width="3.036" opacity="1"/><line x1="404.2" y1="70.7" x2="405.3" y2="72.7" stroke="#ffe400" stroke-width="3.036" opacity="1"/><line x1="408.7" y1="78.75" x2="410.1" y2="81.25" stroke="#ff40e0" stroke-width="3.036" opacity="1"/><line x1="411.0" y1="83.0" x2="412.2" y2="85.0" stroke="#ffa000" stroke-width="3.036" opacity="1"/><line x1="414.2" y1="88.75" x2="415.6" y2="91.25" stroke="#ffe400" stroke-width="3.036" opacity="1"/><line x1="419.9" y1="99.0" x2="421.1" y2="101.0" stroke="#ffe400" stroke-width="3.036" opacity="1"/><line x1="428.2" y1="113.0" x2="429.4" y2="115.0" stroke="#ffe400" stroke-width="3.036" opacity="1"/><line x1="439.8" y1="132.75" x2="441.3" y2="135.25" stroke="#ff40e0" stroke-width="3.036" opacity="1"/><line x1="442.3" y1="137.0" x2="443.5" y2="139.0" stroke="#ffe400" stroke-width="3.036" opacity="1"/><line x1="462.2" y1="170.7" x2="463.4" y2="172.7" stroke="#ff40e0" stroke-width="3.036" opacity="1"/><line x1="465.0" y1="175.45" x2="466.5" y2="177.95" stroke="#ffe400" stroke-width="3.036" opacity="1"/><line x1="468.6" y1="181.5" x2="470.4" y2="184.5" stroke="#ffa000" stroke-width="3.036" opacity="1"/><line x1="515.6" y1="264.0" x2="516.7" y2="266.0" stroke="#ff2020" stroke-width="3.036" opacity="1"/><line x1="517.0" y1="266.5" x2="518.7" y2="269.5" stroke="#ffa000" stroke-width="3.036" opacity="1"/><line x1="425.9" y1="43.25" x2="426.8" y2="44.75" stroke="#ffe400" stroke-width="1.98"/><line x1="440.5" y1="69.25" x2="441.3" y2="70.75" stroke="#ffe400" stroke-width="1.98"/><line x1="450.8" y1="89.0" x2="452.0" y2="91.0" stroke="#ffe400" stroke-width="3.036" opacity="1"/><line x1="455.3" y1="97.0" x2="456.4" y2="99.0" stroke="#ffe400" stroke-width="3.036" opacity="1"/><line x1="458.4" y1="102.5" x2="460.1" y2="105.5" stroke="#ffa000" stroke-width="3.036" opacity="1"/><line x1="463.3" y1="111.0" x2="464.4" y2="113.0" stroke="#ffe400" stroke-width="3.036" opacity="1"/><line x1="468.7" y1="119.25" x2="469.5" y2="120.75" stroke="#ff2020" stroke-width="1.98"/><line x1="471.3" y1="125.0" x2="472.5" y2="127.0" stroke="#ffe400" stroke-width="3.036" opacity="1"/><line x1="485.1" y1="149.0" x2="486.2" y2="151.0" stroke="#ff2020" stroke-width="3.036" opacity="1"/><line x1="488.4" y1="154.75" x2="489.8" y2="157.25" stroke="#ffe400" stroke-width="3.036" opacity="1"/><line x1="490.8" y1="159.0" x2="491.9" y2="161.0" stroke="#ffa000" stroke-width="3.036" opacity="1"/><line x1="514.5" y1="199.25" x2="515.4" y2="200.75" stroke="#ffe400" stroke-width="1.98"/><line x1="517.1" y1="205.0" x2="518.3" y2="207.0" stroke="#ff2020" stroke-width="3.036" opacity="1"/><line x1="518.6" y1="207.5" x2="519.7" y2="209.5" stroke="#ffa000" stroke-width="3.036" opacity="1"/><line x1="475.3" y1="67.0" x2="476.4" y2="69.0" stroke="#ffe400" stroke-width="2.7600000000000002" opacity="1"/><line x1="480.7" y1="76.75" x2="482.1" y2="79.25" stroke="#ff2020" stroke-width="2.7600000000000002" opacity="1"/><line x1="483.0" y1="81.0" x2="484.1" y2="83.0" stroke="#ffa000" stroke-width="2.7600000000000002" opacity="1"/><line x1="487.2" y1="88.5" x2="488.8" y2="91.5" stroke="#ffe400" stroke-width="2.7600000000000002" opacity="1"/><line x1="490.5" y1="94.5" x2="492.1" y2="97.5" stroke="#ffa000" stroke-width="2.7600000000000002" opacity="1"/><line x1="492.9" y1="99.0" x2="494.0" y2="101.0" stroke="#ff40e0" stroke-width="2.7600000000000002" opacity="1"/><line x1="496.0" y1="104.75" x2="497.4" y2="107.25" stroke="#ffe400" stroke-width="2.7600000000000002" opacity="1"/><line x1="501.4" y1="114.75" x2="502.7" y2="117.25" stroke="#ffe400" stroke-width="2.7600000000000002" opacity="1"/><line x1="504.8" y1="121.0" x2="505.8" y2="123.0" stroke="#ffa000" stroke-width="2.7600000000000002" opacity="1"/><line x1="516.5" y1="143.0" x2="517.6" y2="145.0" stroke="#ffe400" stroke-width="2.7600000000000002" opacity="1"/><line x1="521.6" y1="151.25" x2="522.4" y2="152.75" stroke="#ffe400" stroke-width="1.80"/><line x1="529.1" y1="165.25" x2="529.9" y2="166.75" stroke="#ffe400" stroke-width="1.80"/><line x1="480.0" y1="71.0" x2="481.2" y2="73.0" stroke="#ffe400" stroke-width="2.7600000000000002" opacity="1"/><line x1="487.7" y1="84.5" x2="489.4" y2="87.5" stroke="#ffa000" stroke-width="2.7600000000000002" opacity="1"/><line x1="491.2" y1="90.75" x2="492.7" y2="93.25" stroke="#ffe400" stroke-width="2.7600000000000002" opacity="1"/><line x1="501.6" y1="109.0" x2="502.7" y2="111.0" stroke="#ffe400" stroke-width="2.7600000000000002" opacity="1"/><line x1="505.8" y1="116.5" x2="507.5" y2="119.5" stroke="#ffe400" stroke-width="2.7600000000000002" opacity="1"/><line x1="513.7" y1="129.25" x2="514.5" y2="130.75" stroke="#ffe400" stroke-width="1.80"/><line x1="521.6" y1="144.25" x2="523.5" y2="147.75" stroke="#ffa000" stroke-width="2.7600000000000002" opacity="1"/><line x1="524.2" y1="149.0" x2="525.4" y2="151.0" stroke="#ffe400" stroke-width="2.7600000000000002" opacity="1"/><line x1="502.5" y1="43.25" x2="503.4" y2="44.75" stroke="#ffe400" stroke-width="1.74"/><line x1="507.0" y1="51.25" x2="507.8" y2="52.75" stroke="#ffe400" stroke-width="1.74"/><line x1="527.0" y1="87.25" x2="527.8" y2="88.75" stroke="#ffe400" stroke-width="1.74"/><line x1="531.8" y1="97.0" x2="532.9" y2="99.0" stroke="#ffe400" stroke-width="2.668" opacity="1"/><line x1="535.3" y1="103.0" x2="536.4" y2="105.0" stroke="#ffa000" stroke-width="2.668" opacity="1"/><line x1="539.9" y1="111.0" x2="541.1" y2="113.0" stroke="#ff40e0" stroke-width="2.668" opacity="1"/><line x1="545.8" y1="121.0" x2="546.9" y2="123.0" stroke="#ffe400" stroke-width="2.668" opacity="1"/><line x1="553.4" y1="134.0" x2="555.7" y2="138.0" stroke="#ffa000" stroke-width="2.668" opacity="1"/><line x1="561.7" y1="147.25" x2="562.6" y2="148.75" stroke="#ffe400" stroke-width="1.74"/><line x1="504.7" y1="73.25" x2="505.4" y2="74.75" stroke="#ffe400" stroke-width="1.62"/><line x1="511.5" y1="89.0" x2="512.4" y2="91.0" stroke="#ffe400" stroke-width="2.4840000000000004" opacity="1"/><line x1="515.2" y1="97.0" x2="516.1" y2="99.0" stroke="#ffa000" stroke-width="2.4840000000000004" opacity="1"/><line x1="518.6" y1="103.25" x2="519.3" y2="104.75" stroke="#ffe400" stroke-width="1.62"/><line x1="525.3" y1="119.0" x2="526.3" y2="121.0" stroke="#ffe400" stroke-width="2.4840000000000004" opacity="1"/><line x1="532.4" y1="133.25" x2="533.1" y2="134.75" stroke="#ffe400" stroke-width="1.62"/><line x1="546.2" y1="163.25" x2="546.9" y2="164.75" stroke="#ffe400" stroke-width="1.62"/><line x1="543.7" y1="43.25" x2="544.6" y2="44.75" stroke="#ffe400" stroke-width="1.74"/><line x1="547.4" y1="49.25" x2="548.3" y2="50.75" stroke="#ffe400" stroke-width="1.74"/><line x1="565.5" y1="79.25" x2="566.4" y2="80.75" stroke="#ffe400" stroke-width="1.74"/><line x1="588.2" y1="114.75" x2="589.2" y2="116.25" stroke="#ffe400" stroke-width="1.74"/><line x1="586.6" y1="44.9" x2="587.4" y2="46.1" stroke="#ff2020" stroke-width="1.50"/><path d="M544.5 201.500v7.400l1.800-1.600 1.200 2.700 1.100-.5-1.200-2.600h2.400z" fill="#fff" stroke="#222" stroke-width=".5"/></g></svg><div class="t b" style="left:736.4px;top:43.40px;font-size:5.85px;color:#fff;font-family:"DejaVu Sans","Liberation Sans",sans-serif">New</div><div class="t b" style="left:736.4px;top:49.40px;font-size:5.85px;color:#fff;font-family:"DejaVu Sans","Liberation Sans",sans-serif">colourmap</div><div class="a" style="left:761.3px;top:44.1px;width:3.7px;height:3.7px;background:#e03030;"></div><svg style="left:761.300px;top:44.100px" width="3.700" height="3.700" viewBox="0 0 3.700 3.700"><path d="M.9.900l1.900 1.900m0-1.900L.9 2.800" stroke="#fff" stroke-width=".6"/></svg><svg style="left:736.200px;top:58.800px" width="9.300" height="72.100" viewBox="0 0 9.300 72.100"><rect width="9.300" height="72.100" fill="#0018ff"/><rect width="9.300" height="57.900" fill="#fff000"/><rect width="9.300" height="43.200" fill="#ffa000"/><rect width="9.300" height="29.300" fill="#ff1414"/><rect width="9.300" height="14.700" fill="#ff38ff"/></svg><div class="t " style="left:746.5px;top:67.60px;font-size:5px;color:#e0e0e0;font-family:"DejaVu Sans","Liberation Sans",sans-serif">5</div><div class="t " style="left:746.5px;top:82.50px;font-size:5px;color:#e0e0e0;font-family:"DejaVu Sans","Liberation Sans",sans-serif">3</div><div class="t " style="left:746.5px;top:96.70px;font-size:5px;color:#e0e0e0;font-family:"DejaVu Sans","Liberation Sans",sans-serif">1</div><div class="t " style="left:746.5px;top:111.00px;font-size:5px;color:#e0e0e0;font-family:"DejaVu Sans","Liberation Sans",sans-serif">0.5</div><div class="t " style="left:709.5px;top:278.70px;font-size:5.65px;color:#d8d8d8;font-family:"DejaVu Sans","Liberation Sans",sans-serif">Plunge 00</div><div class="t " style="left:709.5px;top:284.50px;font-size:5.65px;color:#d8d8d8;font-family:"DejaVu Sans","Liberation Sans",sans-serif">Azimuth 359</div><svg style="left:746px;top:271.500px" width="19" height="19" viewBox="0 0 19 19"><defs><radialGradient id="cg" cx=".4" cy=".35" r=".7"><stop offset="0" stop-color="#fff" stop-opacity=".35"/><stop offset="1" stop-color="#000" stop-opacity=".35"/></radialGradient><clipPath id="cc"><circle cx="9.500" cy="9.500" r="9"/></clipPath></defs><g clip-path="url(#cc)"><rect width="19" height="10" fill="#4fa0ac"/><rect y="10" width="19" height="9" fill="#8c5c30"/><path d="M9.500 0v19" stroke="#7cc" stroke-width=".4" opacity=".6"/></g><circle cx="9.500" cy="9.500" r="9" fill="url(#cg)"/><text x="9.500" y="12.600" font-size="8.500" font-family="Liberation Serif, serif" font-weight="bold" fill="#fff" text-anchor="middle">S</text></svg><svg style="left:626px;top:299.500px" width="137" height="5" viewBox="0 0 137 5"><path d="M.3.600h44.900v1.600h45.200v-1.600h45.800v1.900h-45.800v1.600h-45.200v-1.600h-44.900z" fill="#f0f0f0"/></svg><div class="t " style="left:626.4px;top:293.00px;font-size:5.4px;color:#d8d8d8;font-family:"DejaVu Sans","Liberation Sans",sans-serif">0</div><div class="t " style="left:667.6px;top:293.00px;font-size:5.4px;color:#d8d8d8;font-family:"DejaVu Sans","Liberation Sans",sans-serif">25</div><div class="t " style="left:713.2px;top:293.00px;font-size:5.4px;color:#d8d8d8;font-family:"DejaVu Sans","Liberation Sans",sans-serif">50</div><div class="t " style="left:755px;top:293.00px;font-size:5.4px;color:#d8d8d8;font-family:"DejaVu Sans","Liberation Sans",sans-serif">75</div><div class="a" style="left:176px;top:314px;width:445px;height:96px;background:#ffffff;border:1px solid #cdcdcd;box-sizing:border-box"></div><div class="a" style="left:177px;top:324.4px;width:443.5px;height:10.8px;background:#dbe5f3;"></div><div class="a" style="left:177px;top:335.2px;width:443.5px;height:10.8px;background:#edf1f8;"></div><div class="a" style="left:177px;top:346.0px;width:443.5px;height:10.8px;background:#dbe5f3;"></div><div class="a" style="left:177px;top:356.79999999999995px;width:443.5px;height:10.8px;background:linear-gradient(#cfcfcf,#a8a8a8);"></div><div class="a" style="left:177px;top:367.59999999999997px;width:443.5px;height:10.8px;background:#dbe5f3;"></div><div class="a" style="left:177px;top:378.4px;width:443.5px;height:10.8px;background:#edf1f8;"></div><div class="a" style="left:177px;top:389.2px;width:443.5px;height:10.8px;background:#dbe5f3;"></div><div class="a" style="left:177px;top:400.0px;width:443.5px;height:10.8px;background:#edf1f8;"></div><svg style="left:178.500px;top:315.500px" width="8" height="7" viewBox="0 0 8 7"><path d="M.8.800l1.200-.2 5 4.600-.6 1-1.200-.4z" fill="#444"/></svg><div class="t " style="left:188px;top:315.10px;font-size:5.3px;">Slicer</div><svg style="left:178.5px;top:327.69999999999993px" width="6.400" height="4" viewBox="0 0 6.400 4"><path d="M.2 2C1.200.600 2.200.200 3.200.200S5.200.600 6.200 2C5.200 3.400 4.200 3.800 3.200 3.800S1.200 3.400.2 2z" fill="#222"/><circle cx="3.200" cy="2" r="1" fill="#fff" opacity=".85"/><circle cx="3.200" cy="2" r=".5" fill="#222"/></svg><svg style="left:186.3px;top:326.29999999999995px" width="7" height="6.800" viewBox="0 0 7 6.800"><rect x=".4" y=".5" width="6.200" height="5.800" rx=".6" fill="#d8f0c8" stroke="#48a030" stroke-width=".6"/><rect x=".4" y=".5" width="6.200" height="1.600" fill="#48a030"/></svg><div class="t" style="left:194.900px;top:325.55px;font-size:5.300px">Assay</div><svg style="left:437.7px;top:326.69999999999993px" width="6" height="6" viewBox="0 0 6 6"><path d="M.8.800l4.400 4.400m0-4.400L.8 5.200" stroke="#484848" stroke-width="1.300"/><path d="M.3 1.400L1.400.3M4.600.3l1.100 1.100M5.700 4.600L4.600 5.700M1.400 5.700L.3 4.600" stroke="#484848" stroke-width=".7"/></svg><div class="a" style="left:448.3px;top:325.3999999999999px;width:45.3px;height:8.6px;background:#ffffff;border:.5px solid #a4a4a4;box-sizing:border-box;border-radius:.6px"></div><svg style="left:488.1px;top:328.19999999999993px" width="4.400" height="3" viewBox="0 0 4.400 3"><path d="M.5.500l1.700 1.700L3.900.500" stroke="#333" stroke-width=".7" fill="none"/></svg><svg style="left:545px;top:328.49999999999994px" width="21" height="2.400" viewBox="0 0 21 2.400"><rect x=".2" y=".2" width="20.600" height="2" rx="1" fill="#dcdcdc" stroke="#c0c0c0" stroke-width=".4"/></svg><svg style="left:564.4px;top:326.90px" width="12.800" height="5.600" viewBox="0 0 12.800 5.600"><rect x=".3" y=".3" width="12.200" height="5" rx="1.400" fill="#e6e6e6" stroke="#a6a6a6" stroke-width=".5"/></svg><div class="a" style="left:569.6999999999999px;top:329.29999999999995px;width:2px;height:0.8px;background:#aaa;"></div><svg style="left:178.5px;top:338.49999999999994px" width="6.400" height="4" viewBox="0 0 6.400 4"><path d="M.2 2C1.200.600 2.200.200 3.200.200S5.200.600 6.200 2C5.200 3.400 4.200 3.800 3.200 3.800S1.200 3.400.2 2z" fill="#c8c8c8"/><circle cx="3.200" cy="2" r="1" fill="#fff" opacity=".85"/><circle cx="3.200" cy="2" r=".5" fill="#c8c8c8"/></svg><svg style="left:186.3px;top:337.09999999999997px" width="7" height="6.800" viewBox="0 0 7 6.800"><rect x=".4" y=".5" width="6.200" height="5.800" rx=".6" fill="#c8e0b8" stroke="#48803a" stroke-width=".6"/><circle cx="3.500" cy="3.600" r="1.600" fill="#486a38"/></svg><div class="t" style="left:194.900px;top:336.35px;font-size:5.300px">Au_Economic_Composite</div><svg style="left:437.7px;top:337.49999999999994px" width="6" height="6" viewBox="0 0 6 6"><path d="M.8.800l4.400 4.400m0-4.400L.8 5.200" stroke="#484848" stroke-width="1.300"/><path d="M.3 1.400L1.400.3M4.600.3l1.100 1.100M5.700 4.600L4.600 5.700M1.400 5.700L.3 4.600" stroke="#484848" stroke-width=".7"/></svg><div class="a" style="left:448.3px;top:336.19999999999993px;width:45.3px;height:8.6px;background:#ffffff;border:.5px solid #a4a4a4;box-sizing:border-box;border-radius:.6px"></div><svg style="left:488.1px;top:338.99999999999994px" width="4.400" height="3" viewBox="0 0 4.400 3"><path d="M.5.500l1.700 1.700L3.900.500" stroke="#333" stroke-width=".7" fill="none"/></svg><svg style="left:545px;top:339.29999999999995px" width="21" height="2.400" viewBox="0 0 21 2.400"><rect x=".2" y=".2" width="20.600" height="2" rx="1" fill="#dcdcdc" stroke="#c0c0c0" stroke-width=".4"/></svg><svg style="left:564.4px;top:337.70px" width="12.800" height="5.600" viewBox="0 0 12.800 5.600"><rect x=".3" y=".3" width="12.200" height="5" rx="1.400" fill="#e6e6e6" stroke="#a6a6a6" stroke-width=".5"/></svg><div class="a" style="left:569.6999999999999px;top:340.09999999999997px;width:2px;height:0.8px;background:#aaa;"></div><svg style="left:178.5px;top:349.29999999999995px" width="6.400" height="4" viewBox="0 0 6.400 4"><path d="M.2 2C1.200.600 2.200.200 3.200.200S5.200.600 6.200 2C5.200 3.400 4.200 3.800 3.200 3.800S1.200 3.400.2 2z" fill="#c8c8c8"/><circle cx="3.200" cy="2" r="1" fill="#fff" opacity=".85"/><circle cx="3.200" cy="2" r=".5" fill="#c8c8c8"/></svg><svg style="left:186.3px;top:347.9px" width="7" height="6.800" viewBox="0 0 7 6.800"><path d="M.8 5.500L3 .8l1.500 3 1.800 2" stroke="#d02020" stroke-width="1" fill="none"/><path d="M2 5.800l1.500-2.500 2.500 2.500" stroke="#2040d0" stroke-width=".9" fill="none"/></svg><div class="t" style="left:194.900px;top:347.15px;font-size:5.300px">Au Indicator 0.5 at 0.3 isovalue values</div><svg style="left:437.7px;top:348.29999999999995px" width="6" height="6" viewBox="0 0 6 6"><path d="M.8.800l4.400 4.400m0-4.400L.8 5.200" stroke="#484848" stroke-width="1.300"/><path d="M.3 1.400L1.400.3M4.600.3l1.100 1.100M5.700 4.600L4.600 5.700M1.400 5.700L.3 4.600" stroke="#484848" stroke-width=".7"/></svg><div class="a" style="left:448.3px;top:346.99999999999994px;width:45.3px;height:8.6px;background:#ffffff;border:.5px solid #a4a4a4;box-sizing:border-box;border-radius:.6px"></div><svg style="left:488.1px;top:349.79999999999995px" width="4.400" height="3" viewBox="0 0 4.400 3"><path d="M.5.500l1.700 1.700L3.900.500" stroke="#333" stroke-width=".7" fill="none"/></svg><svg style="left:545px;top:350.09999999999997px" width="21" height="2.400" viewBox="0 0 21 2.400"><rect x=".2" y=".2" width="20.600" height="2" rx="1" fill="#dcdcdc" stroke="#c0c0c0" stroke-width=".4"/></svg><svg style="left:564.4px;top:348.50px" width="12.800" height="5.600" viewBox="0 0 12.800 5.600"><rect x=".3" y=".3" width="12.200" height="5" rx="1.400" fill="#e6e6e6" stroke="#a6a6a6" stroke-width=".5"/></svg><div class="a" style="left:569.6999999999999px;top:350.9px;width:2px;height:0.8px;background:#aaa;"></div><svg style="left:178.5px;top:360.0999999999999px" width="6.400" height="4" viewBox="0 0 6.400 4"><path d="M.2 2C1.200.600 2.200.200 3.200.200S5.200.600 6.200 2C5.200 3.400 4.200 3.800 3.200 3.800S1.200 3.400.2 2z" fill="#c8c8c8"/><circle cx="3.200" cy="2" r="1" fill="#fff" opacity=".85"/><circle cx="3.200" cy="2" r=".5" fill="#c8c8c8"/></svg><svg style="left:186.3px;top:358.69999999999993px" width="7" height="6.800" viewBox="0 0 7 6.800"><path d="M.6 4c0-2 1-3.400 2.800-3.400 2 0 3 1.200 3 2.800 0 1.800-1.200 2.800-3 2.800C1.600 6.200.6 5.400.6 4z" fill="#2a8a8a"/><path d="M2 2.500c.8-.6 1.500 0 1.400.8M4 4.500c.6.300 1.200-.2 1.200-.8" stroke="#b8f0e0" stroke-width=".6" fill="none"/></svg><div class="t" style="left:194.900px;top:357.95px;font-size:5.300px"><span style="color:#2a7a3a;font-style:italic">Au Indicator 0.5 at 0.3 isovalue</span>: Inside</div><svg style="left:437.7px;top:359.0999999999999px" width="6" height="6" viewBox="0 0 6 6"><path d="M.8.800l4.400 4.400m0-4.400L.8 5.200" stroke="#484848" stroke-width="1.300"/><path d="M.3 1.400L1.400.3M4.600.3l1.100 1.100M5.700 4.600L4.600 5.700M1.400 5.700L.3 4.600" stroke="#484848" stroke-width=".7"/></svg><div class="a" style="left:448.3px;top:357.7999999999999px;width:45.3px;height:8.6px;background:#ffffff;border:.5px solid #a4a4a4;box-sizing:border-box;border-radius:.6px"></div><svg style="left:488.1px;top:360.5999999999999px" width="4.400" height="3" viewBox="0 0 4.400 3"><path d="M.5.500l1.700 1.700L3.900.500" stroke="#333" stroke-width=".7" fill="none"/></svg><svg style="left:545px;top:360.8999999999999px" width="21" height="2.400" viewBox="0 0 21 2.400"><rect x=".2" y=".2" width="20.600" height="2" rx="1" fill="#dcdcdc" stroke="#c0c0c0" stroke-width=".4"/></svg><svg style="left:564.4px;top:359.30px" width="12.800" height="5.600" viewBox="0 0 12.800 5.600"><rect x=".3" y=".3" width="12.200" height="5" rx="1.400" fill="#e6e6e6" stroke="#a6a6a6" stroke-width=".5"/></svg><div class="a" style="left:569.6999999999999px;top:361.69999999999993px;width:2px;height:0.8px;background:#aaa;"></div><svg style="left:178.5px;top:370.8999999999999px" width="6.400" height="4" viewBox="0 0 6.400 4"><path d="M.2 2C1.200.600 2.200.200 3.200.200S5.200.600 6.200 2C5.200 3.400 4.200 3.800 3.200 3.800S1.200 3.400.2 2z" fill="#222"/><circle cx="3.200" cy="2" r="1" fill="#fff" opacity=".85"/><circle cx="3.200" cy="2" r=".5" fill="#222"/></svg><svg style="left:186.3px;top:369.49999999999994px" width="7" height="6.800" viewBox="0 0 7 6.800"><path d="M.6 4c0-2 1-3.400 2.800-3.400 2 0 3 1.200 3 2.800 0 1.800-1.200 2.800-3 2.800C1.600 6.200.6 5.400.6 4z" fill="#2a8a8a"/><path d="M2 2.500c.8-.6 1.500 0 1.400.8M4 4.500c.6.300 1.200-.2 1.200-.8" stroke="#b8f0e0" stroke-width=".6" fill="none"/></svg><div class="t" style="left:194.900px;top:368.75px;font-size:5.300px"><span style="color:#2a7a3a;font-style:italic">Au Indicator 0.5 at 0.5 isovalue</span>: Inside</div><svg style="left:437.7px;top:369.8999999999999px" width="6" height="6" viewBox="0 0 6 6"><path d="M.8.800l4.400 4.400m0-4.400L.8 5.200" stroke="#484848" stroke-width="1.300"/><path d="M.3 1.400L1.400.3M4.600.3l1.100 1.100M5.700 4.600L4.600 5.700M1.400 5.700L.3 4.600" stroke="#484848" stroke-width=".7"/></svg><div class="a" style="left:448.3px;top:368.5999999999999px;width:45.3px;height:8.6px;background:#ffffff;border:.5px solid #a4a4a4;box-sizing:border-box;border-radius:.6px"></div><svg style="left:488.1px;top:371.3999999999999px" width="4.400" height="3" viewBox="0 0 4.400 3"><path d="M.5.500l1.700 1.700L3.900.500" stroke="#333" stroke-width=".7" fill="none"/></svg><svg style="left:545px;top:371.69999999999993px" width="21" height="2.400" viewBox="0 0 21 2.400"><rect x=".2" y=".2" width="20.600" height="2" rx="1" fill="#dcdcdc" stroke="#c0c0c0" stroke-width=".4"/></svg><svg style="left:564.4px;top:370.10px" width="12.800" height="5.600" viewBox="0 0 12.800 5.600"><rect x=".3" y=".3" width="12.200" height="5" rx="1.400" fill="#e6e6e6" stroke="#a6a6a6" stroke-width=".5"/></svg><div class="a" style="left:569.6999999999999px;top:372.49999999999994px;width:2px;height:0.8px;background:#aaa;"></div><svg style="left:178.5px;top:381.69999999999993px" width="6.400" height="4" viewBox="0 0 6.400 4"><path d="M.2 2C1.200.600 2.200.200 3.200.200S5.200.600 6.200 2C5.200 3.400 4.200 3.800 3.200 3.800S1.200 3.400.2 2z" fill="#222"/><circle cx="3.200" cy="2" r="1" fill="#fff" opacity=".85"/><circle cx="3.200" cy="2" r=".5" fill="#222"/></svg><svg style="left:186.3px;top:380.29999999999995px" width="7" height="6.800" viewBox="0 0 7 6.800"><path d="M.6 4c0-2 1-3.400 2.800-3.400 2 0 3 1.200 3 2.800 0 1.800-1.200 2.800-3 2.800C1.600 6.200.6 5.400.6 4z" fill="#2a8a8a"/><path d="M2 2.500c.8-.6 1.500 0 1.400.8M4 4.500c.6.300 1.200-.2 1.200-.8" stroke="#b8f0e0" stroke-width=".6" fill="none"/></svg><div class="t" style="left:194.900px;top:379.55px;font-size:5.300px"><span style="color:#2a7a3a;font-style:italic">Au Indicator 0.5 at 0.7 isovalue</span>: Inside</div><svg style="left:437.7px;top:380.69999999999993px" width="6" height="6" viewBox="0 0 6 6"><path d="M.8.800l4.400 4.400m0-4.400L.8 5.200" stroke="#484848" stroke-width="1.300"/><path d="M.3 1.400L1.400.3M4.600.3l1.100 1.100M5.700 4.600L4.600 5.700M1.400 5.700L.3 4.600" stroke="#484848" stroke-width=".7"/></svg><div class="a" style="left:448.3px;top:379.3999999999999px;width:45.3px;height:8.6px;background:#ffffff;border:.5px solid #a4a4a4;box-sizing:border-box;border-radius:.6px"></div><svg style="left:488.1px;top:382.19999999999993px" width="4.400" height="3" viewBox="0 0 4.400 3"><path d="M.5.500l1.700 1.700L3.900.500" stroke="#333" stroke-width=".7" fill="none"/></svg><svg style="left:545px;top:382.49999999999994px" width="21" height="2.400" viewBox="0 0 21 2.400"><rect x=".2" y=".2" width="20.600" height="2" rx="1" fill="#dcdcdc" stroke="#c0c0c0" stroke-width=".4"/></svg><svg style="left:564.4px;top:380.90px" width="12.800" height="5.600" viewBox="0 0 12.800 5.600"><rect x=".3" y=".3" width="12.200" height="5" rx="1.400" fill="#e6e6e6" stroke="#a6a6a6" stroke-width=".5"/></svg><div class="a" style="left:569.6999999999999px;top:383.29999999999995px;width:2px;height:0.8px;background:#aaa;"></div><svg style="left:178.5px;top:392.49999999999994px" width="6.400" height="4" viewBox="0 0 6.400 4"><path d="M.2 2C1.200.600 2.200.200 3.200.200S5.200.600 6.200 2C5.200 3.400 4.200 3.800 3.200 3.800S1.200 3.400.2 2z" fill="#222"/><circle cx="3.200" cy="2" r="1" fill="#fff" opacity=".85"/><circle cx="3.200" cy="2" r=".5" fill="#222"/></svg><svg style="left:186.3px;top:391.09999999999997px" width="7" height="6.800" viewBox="0 0 7 6.800"><path d="M.6 4.200c0-2 1-3.400 2.800-3.400 2 0 3 1 3 2.600 0 1.800-1.200 2.800-3 2.800C1.600 6.200.6 5.600.6 4.200z" fill="#2a8aa0"/><path d="M1.800 3c.8-.6 2-.4 2.800.2" stroke="#a8e8f0" stroke-width=".6" fill="none"/></svg><div class="t" style="left:194.900px;top:390.35px;font-size:5.300px"><span style="color:#2a7a3a;font-style:italic">GM_Vein_Model</span>: Lodes</div><svg style="left:437.7px;top:391.49999999999994px" width="6" height="6" viewBox="0 0 6 6"><path d="M.8.800l4.400 4.400m0-4.400L.8 5.200" stroke="#484848" stroke-width="1.300"/><path d="M.3 1.400L1.400.3M4.600.3l1.100 1.100M5.700 4.600L4.600 5.700M1.400 5.700L.3 4.600" stroke="#484848" stroke-width=".7"/></svg><div class="a" style="left:448.3px;top:390.19999999999993px;width:45.3px;height:8.6px;background:#ffffff;border:.5px solid #a4a4a4;box-sizing:border-box;border-radius:.6px"></div><svg style="left:488.1px;top:392.99999999999994px" width="4.400" height="3" viewBox="0 0 4.400 3"><path d="M.5.500l1.700 1.700L3.900.500" stroke="#333" stroke-width=".7" fill="none"/></svg><svg style="left:545px;top:393.29999999999995px" width="21" height="2.400" viewBox="0 0 21 2.400"><rect x=".2" y=".2" width="20.600" height="2" rx="1" fill="#dcdcdc" stroke="#c0c0c0" stroke-width=".4"/></svg><svg style="left:564.4px;top:391.70px" width="12.800" height="5.600" viewBox="0 0 12.800 5.600"><rect x=".3" y=".3" width="12.200" height="5" rx="1.400" fill="#e6e6e6" stroke="#a6a6a6" stroke-width=".5"/></svg><div class="a" style="left:569.6999999999999px;top:394.09999999999997px;width:2px;height:0.8px;background:#aaa;"></div><svg style="left:178.5px;top:403.29999999999995px" width="6.400" height="4" viewBox="0 0 6.400 4"><path d="M.2 2C1.200.600 2.200.200 3.200.200S5.200.600 6.200 2C5.200 3.400 4.200 3.800 3.200 3.800S1.200 3.400.2 2z" fill="#c8c8c8"/><circle cx="3.200" cy="2" r="1" fill="#fff" opacity=".85"/><circle cx="3.200" cy="2" r=".5" fill="#c8c8c8"/></svg><svg style="left:186.3px;top:401.9px" width="7" height="6.800" viewBox="0 0 7 6.800"><rect x="1" y="1" width="5" height="5" fill="#2a7a2a"/><path d="M.3 3.500h6.400M3.500.3v6.200" stroke="#4aa04a" stroke-width=".8"/></svg><div class="t" style="left:194.900px;top:401.15px;font-size:5.300px"><span style="color:#2a7a3a;font-style:italic">GM_Economic_Composite</span>: Waste - Ore contacts</div><svg style="left:437.7px;top:402.29999999999995px" width="6" height="6" viewBox="0 0 6 6"><path d="M.8.800l4.400 4.400m0-4.400L.8 5.200" stroke="#484848" stroke-width="1.300"/><path d="M.3 1.400L1.400.3M4.600.3l1.100 1.100M5.700 4.600L4.600 5.700M1.400 5.700L.3 4.600" stroke="#484848" stroke-width=".7"/></svg><div class="a" style="left:448.3px;top:400.99999999999994px;width:45.3px;height:8.6px;background:#ffffff;border:.5px solid #a4a4a4;box-sizing:border-box;border-radius:.6px"></div><svg style="left:488.1px;top:403.79999999999995px" width="4.400" height="3" viewBox="0 0 4.400 3"><path d="M.5.500l1.700 1.700L3.900.500" stroke="#333" stroke-width=".7" fill="none"/></svg><svg style="left:545px;top:404.09999999999997px" width="21" height="2.400" viewBox="0 0 21 2.400"><rect x=".2" y=".2" width="20.600" height="2" rx="1" fill="#dcdcdc" stroke="#c0c0c0" stroke-width=".4"/></svg><svg style="left:552px;top:402.50px" width="12.800" height="5.600" viewBox="0 0 12.800 5.600"><rect x=".3" y=".3" width="12.200" height="5" rx="1.400" fill="#e6e6e6" stroke="#a6a6a6" stroke-width=".5"/></svg><div class="a" style="left:557.3px;top:404.9px;width:2px;height:0.8px;background:#aaa;"></div><div class="a" style="left:565px;top:404.69999999999993px;width:12px;height:1.3px;background:#c8c8c8;border-radius:.6px"></div><div class="t " style="left:457.5px;top:325.60px;font-size:5.2px;">Au</div><svg style="left:449.500px;top:326.69999999999993px" width="7" height="6" viewBox="0 0 7 6"><path d="M.6 5.400L2.400.600l1.200 2.800L5.400 5" stroke="#d02020" stroke-width=".8" fill="none"/><path d="M2 5.400l1.400-2 2.600 1.800" stroke="#2040d0" stroke-width=".7" fill="none"/></svg><div class="t " style="left:456.5px;top:336.40px;font-size:5.2px;">status</div><svg style="left:449.500px;top:337.49999999999994px" width="7" height="6" viewBox="0 0 7 6"><path d="M.6 5.600L3.200.400l2.600 5.200z" fill="#2a60d0"/><path d="M1.800 4h2.800" stroke="#fff" stroke-width=".6"/></svg><div class="t " style="left:456.5px;top:347.20px;font-size:5.2px;">Sample gro...</div><svg style="left:449.500px;top:348.29999999999995px" width="7" height="6" viewBox="0 0 7 6"><rect x=".8" y=".6" width="1.800" height="1.800" fill="#d02020"/><rect x="3.600" y=".6" width="1.800" height="1.800" fill="#2a60d0"/><rect x=".8" y="3.400" width="1.800" height="1.800" fill="#30a030"/><rect x="3.600" y="3.400" width="1.800" height="1.800" fill="#e8b020"/></svg><div class="t " style="left:456.5px;top:358.00px;font-size:5.2px;">Indicator V...</div><svg style="left:449.500px;top:359.0999999999999px" width="7" height="6" viewBox="0 0 7 6"><circle cx="3.300" cy="1.800" r="1.600" fill="#d03030"/><circle cx="1.900" cy="4" r="1.600" fill="#3050c0"/><circle cx="4.700" cy="4" r="1.600" fill="#30a040"/></svg><div class="t " style="left:456.5px;top:368.80px;font-size:5.2px;">Indicator V...</div><svg style="left:449.500px;top:369.8999999999999px" width="7" height="6" viewBox="0 0 7 6"><circle cx="3.300" cy="1.800" r="1.600" fill="#d03030"/><circle cx="1.900" cy="4" r="1.600" fill="#3050c0"/><circle cx="4.700" cy="4" r="1.600" fill="#30a040"/></svg><div class="t " style="left:456.5px;top:379.60px;font-size:5.2px;">Indicator V...</div><svg style="left:449.500px;top:380.69999999999993px" width="7" height="6" viewBox="0 0 7 6"><circle cx="3.300" cy="1.800" r="1.600" fill="#d03030"/><circle cx="1.900" cy="4" r="1.600" fill="#3050c0"/><circle cx="4.700" cy="4" r="1.600" fill="#30a040"/></svg><div class="t " style="left:456.5px;top:390.40px;font-size:5.2px;">Lithology</div><svg style="left:449.500px;top:391.49999999999994px" width="7" height="6" viewBox="0 0 7 6"><circle cx="3.300" cy="1.800" r="1.600" fill="#d03030"/><circle cx="1.900" cy="4" r="1.600" fill="#3050c0"/><circle cx="4.700" cy="4" r="1.600" fill="#30a040"/></svg><div class="t " style="left:456.5px;top:401.20px;font-size:5.2px;">Lithology</div><svg style="left:449.500px;top:402.29999999999995px" width="7" height="6" viewBox="0 0 7 6"><circle cx="3.300" cy="1.800" r="1.600" fill="#d03030"/><circle cx="1.900" cy="4" r="1.600" fill="#3050c0"/><circle cx="4.700" cy="4" r="1.600" fill="#30a040"/></svg><div class="a" style="left:495.4px;top:325.3999999999999px;width:46.6px;height:8.6px;background:#ffffff;border:.5px solid #a4a4a4;box-sizing:border-box;border-radius:.6px"></div><svg style="left:536.5px;top:328.19999999999993px" width="4.400" height="3" viewBox="0 0 4.400 3"><path d="M.5.500l1.700 1.700L3.900.500" stroke="#333" stroke-width=".7" fill="none"/></svg><svg style="left:496.400px;top:326.49999999999994px" width="12.600" height="6.400" viewBox="0 0 12.600 6.400"><rect width="12.600" height="6.400" fill="#f0d020"/><rect width="8.400" height="6.400" fill="#e02020"/><rect width="4.200" height="6.400" fill="#1838d8"/></svg><div class="t " style="left:510.3px;top:325.50px;font-size:5.2px;">New colo...</div><div class="a" style="left:495.4px;top:336.19999999999993px;width:46.6px;height:8.6px;background:linear-gradient(#fdfdfd,#ececec);border:.5px solid #9a9a9a;box-sizing:border-box;border-radius:.8px"></div><div class="t " style="left:505px;top:336.30px;font-size:5.3px;">Edit Colours</div><div class="a" style="left:495.4px;top:346.99999999999994px;width:46.6px;height:8.6px;background:linear-gradient(#fdfdfd,#ececec);border:.5px solid #9a9a9a;box-sizing:border-box;border-radius:.8px"></div><div class="t " style="left:505px;top:347.10px;font-size:5.3px;">Edit Colours</div><div class="a" style="left:495.4px;top:358.0999999999999px;width:46.6px;height:8px;background:#86d488;border:.5px solid #9ab;box-sizing:border-box"></div><div class="a" style="left:495.4px;top:368.8999999999999px;width:46.6px;height:8px;background:#b0d4e8;border:.5px solid #9ab;box-sizing:border-box"></div><div class="a" style="left:495.4px;top:379.69999999999993px;width:46.6px;height:8px;background:#1f86ee;border:.5px solid #9ab;box-sizing:border-box"></div><div class="a" style="left:495.4px;top:390.49999999999994px;width:46.6px;height:8px;background:#ee2cdc;border:.5px solid #9ab;box-sizing:border-box"></div><div class="a" style="left:495.4px;top:401.29999999999995px;width:22px;height:8px;background:#ff2c18;border:.5px solid #9ab;box-sizing:border-box"></div><div class="a" style="left:520px;top:401.29999999999995px;width:22px;height:8px;background:#b8dcf0;border:.5px solid #9ab;box-sizing:border-box"></div><svg style="left:448px;top:315px" width="72" height="9" viewBox="0 0 72 9"><circle cx="4" cy="4.500" r="3.300" fill="#d4ac20"/><path d="M1.500 6l5-3.500" stroke="#665" stroke-width="1"/><path d="M2 3h3" stroke="#fff4c0" stroke-width=".7"/><circle cx="11.500" cy="4.500" r="3.100" fill="#b4dce8"/><circle cx="19" cy="4.500" r="3.100" fill="#f0c4dc"/><circle cx="27" cy="4.500" r="3.300" fill="#c4ac20"/><path d="M24.500 6.500l5-4" stroke="#3a3" stroke-width="1.100"/><path d="M31.500 1l4.500 7m0-7l-4.500 7" stroke="#2a7a2a" stroke-width="1.300"/><circle cx="33.700" cy="4.500" r="1.500" fill="#d03030"/><rect x="38.500" y="1.300" width="6.200" height="6.200" fill="#248a24"/><rect x="46.500" y="1.800" width="6.500" height="5.200" fill="#3454ac"/><path d="M46.500 4.400h6.500" stroke="#cde" stroke-width=".7"/><rect x="56" y="3.300" width="4.200" height="4" fill="#dedede" stroke="#c0c0c0" stroke-width=".4"/><path d="M57 3.300V2.200a1.100 1.100 0 0 1 2.200 0v1.100" stroke="#c0c0c0" stroke-width=".6" fill="none"/><path d="M63 1.500l6 5-.9 1.200-5.800-4.500z" fill="#3c3c3c"/><path d="M64 7l4.500 1" stroke="#3a3" stroke-width="1.100"/></svg><svg style="left:437.7px;top:316px" width="6" height="6" viewBox="0 0 6 6"><path d="M.8.800l4.400 4.400m0-4.400L.8 5.200" stroke="#484848" stroke-width="1.300"/><path d="M.3 1.400L1.400.3M4.600.3l1.100 1.100M5.700 4.600L4.600 5.700M1.400 5.700L.3 4.600" stroke="#484848" stroke-width=".7"/></svg><svg style="left:580px;top:326.19999999999993px" width="42" height="7" viewBox="0 0 42 7"><circle cx="3.400" cy="3.500" r="2.400" fill="#c850c0"/><path d="M3.400.500v6" stroke="#c850c0" stroke-width="1"/><path d="M9 1c2 1 2 4 0 5.500M11 3.500h3" stroke="#9ab4e0" stroke-width=".8" fill="none"/><path d="M16.500 6l2-5 2 5" stroke="#b8c0c8" stroke-width=".8" fill="none"/><path d="M24.500 6.300L27 .800l2.500 5.500M25.500 4.300h3" stroke="#b0c0d8" stroke-width="1" fill="none"/><rect x="33" y=".800" width="6" height="5.600" fill="#fff" stroke="#555" stroke-width=".5"/><path d="M33 2.600h6M33 4.400h6M35.500 .800v5.600" stroke="#555" stroke-width=".4"/><rect x="33.300" y="1" width="2" height="1.400" fill="#d04040"/><rect x="33.300" y="2.800" width="2" height="1.400" fill="#40a040"/></svg><svg style="left:580px;top:336.99999999999994px" width="42" height="7" viewBox="0 0 42 7"><circle cx="3.400" cy="3.500" r="2.400" fill="#c850c0"/><path d="M3.400.500v6" stroke="#c850c0" stroke-width="1"/><path d="M16.500 6l2-5 2 5" stroke="#444" stroke-width=".8" fill="none"/><path d="M24.500 6.300L27 .800l2.500 5.500M25.500 4.300h3" stroke="#b0c0d8" stroke-width="1" fill="none"/><rect x="33" y=".800" width="6" height="5.600" fill="#fff" stroke="#555" stroke-width=".5"/><path d="M33 2.600h6M33 4.400h6M35.500 .800v5.600" stroke="#555" stroke-width=".4"/><rect x="33.300" y="1" width="2" height="1.400" fill="#d04040"/><rect x="33.300" y="2.800" width="2" height="1.400" fill="#40a040"/></svg><svg style="left:580px;top:347.79999999999995px" width="42" height="7" viewBox="0 0 42 7"><circle cx="3.400" cy="3.500" r="2.400" fill="#e8c0e4"/><path d="M24.500 6.300L27 .800l2.500 5.500M25.500 4.300h3" stroke="#b0c0d8" stroke-width="1" fill="none"/><rect x="33" y=".800" width="6" height="5.600" fill="#f4f4f8" stroke="#c0c0c8" stroke-width=".5"/></svg><svg style="left:580.4px;top:359.0999999999999px;opacity:0.9" width="6" height="6" viewBox="0 0 6 6"><path d="M.4 5.400L3.400.400l2.200 5z" fill="#a8c0e0"/></svg><svg style="left:588.6px;top:359.0999999999999px;opacity:0.9" width="6" height="6" viewBox="0 0 6 6"><path d="M.4 5.400L3.400.400l2.200 5z" fill="#a8c0e0"/></svg><svg style="left:596.2px;top:359.0999999999999px;opacity:0.8" width="6" height="6" viewBox="0 0 6 6"><path d="M.4 5.400L3.400.400l2.200 5z" fill="#c8d8b0"/></svg><svg style="left:613px;top:359.2999999999999px" width="6" height="5.600" viewBox="0 0 6 5.600"><rect x=".3" y=".3" width="5.400" height="5" fill="#f4f4f8" stroke="#d0d0d8" stroke-width=".5"/></svg><svg style="left:580.4px;top:369.8999999999999px;opacity:0.9" width="6" height="6" viewBox="0 0 6 6"><path d="M.4 5.400L3.400.400l2.200 5z" fill="#a8c0e0"/></svg><svg style="left:588.6px;top:369.8999999999999px;opacity:0.9" width="6" height="6" viewBox="0 0 6 6"><path d="M.4 5.400L3.400.400l2.200 5z" fill="#a8c0e0"/></svg><svg style="left:596.2px;top:369.8999999999999px;opacity:0.8" width="6" height="6" viewBox="0 0 6 6"><path d="M.4 5.400L3.400.400l2.200 5z" fill="#c8d8b0"/></svg><svg style="left:613px;top:370.0999999999999px" width="6" height="5.600" viewBox="0 0 6 5.600"><rect x=".3" y=".3" width="5.400" height="5" fill="#f4f4f8" stroke="#d0d0d8" stroke-width=".5"/></svg><svg style="left:580.4px;top:380.69999999999993px;opacity:0.9" width="6" height="6" viewBox="0 0 6 6"><path d="M.4 5.400L3.400.400l2.200 5z" fill="#a8c0e0"/></svg><svg style="left:588.6px;top:380.69999999999993px;opacity:0.9" width="6" height="6" viewBox="0 0 6 6"><path d="M.4 5.400L3.400.400l2.200 5z" fill="#a8c0e0"/></svg><svg style="left:596.2px;top:380.69999999999993px;opacity:0.8" width="6" height="6" viewBox="0 0 6 6"><path d="M.4 5.400L3.400.400l2.200 5z" fill="#c8d8b0"/></svg><svg style="left:613px;top:380.8999999999999px" width="6" height="5.600" viewBox="0 0 6 5.600"><rect x=".3" y=".3" width="5.400" height="5" fill="#f4f4f8" stroke="#d0d0d8" stroke-width=".5"/></svg><svg style="left:580.4px;top:391.49999999999994px;opacity:0.9" width="6" height="6" viewBox="0 0 6 6"><path d="M.4 5.400L3.400.400l2.200 5z" fill="#a8c0e0"/></svg><svg style="left:588.6px;top:391.49999999999994px;opacity:0.9" width="6" height="6" viewBox="0 0 6 6"><path d="M.4 5.400L3.400.400l2.200 5z" fill="#a8c0e0"/></svg><svg style="left:596.2px;top:391.49999999999994px;opacity:0.8" width="6" height="6" viewBox="0 0 6 6"><path d="M.4 5.400L3.400.400l2.200 5z" fill="#c8d8b0"/></svg><svg style="left:613px;top:391.69999999999993px" width="6" height="5.600" viewBox="0 0 6 5.600"><rect x=".3" y=".3" width="5.400" height="5" fill="#f4f4f8" stroke="#d0d0d8" stroke-width=".5"/></svg><svg style="left:580.4px;top:402.29999999999995px;opacity:0.9" width="6" height="6" viewBox="0 0 6 6"><path d="M.4 5.400L3.400.400l2.200 5z" fill="#a8c0e0"/></svg><svg style="left:588.6px;top:402.29999999999995px;opacity:0.9" width="6" height="6" viewBox="0 0 6 6"><path d="M.4 5.400L3.400.400l2.200 5z" fill="#a8c0e0"/></svg><svg style="left:596.2px;top:402.29999999999995px;opacity:0.8" width="6" height="6" viewBox="0 0 6 6"><path d="M.4 5.400L3.400.400l2.200 5z" fill="#c8d8b0"/></svg><svg style="left:613px;top:402.49999999999994px" width="6" height="5.600" viewBox="0 0 6 5.600"><rect x=".3" y=".3" width="5.400" height="5" fill="#f4f4f8" stroke="#d0d0d8" stroke-width=".5"/></svg><svg style="left:604px;top:401.79999999999995px" width="6" height="7" viewBox="0 0 6 7"><path d="M3 .500l1.500 2-1 1.500 1.500 2.500h-4l1.500-2.500z" fill="#8a3a1a"/></svg><div class="a" style="left:624.2px;top:314.5px;width:144px;height:95px;background:#f1f1f1;border-top:.5px solid #c0c0c0;border-left:.5px solid #c0c0c0;box-sizing:border-box"></div><svg style="left:627.500px;top:317.500px" width="7.500" height="7" viewBox="0 0 7.500 7"><path d="M.6 4c0-2 1-3.400 2.800-3.400 2 0 3.400 1.200 3.400 2.800 0 1.800-1.400 3-3.200 3C1.800 6.400.6 5.400.6 4z" fill="#2a8a8a"/><path d="M2 2.500c.8-.6 1.500 0 1.400.8M4 4.500c.6.300 1.200-.2 1.200-.8" stroke="#c8f4e8" stroke-width=".7" fill="none"/></svg><div class="t b" style="left:637.7px;top:317.30px;font-size:5.3px;">Inside</div><div class="t " style="left:627.2px;top:330.30px;font-size:5.3px;">Slice mode:</div><div class="a" style="left:667px;top:330px;width:98px;height:10px;background:#f6f6f6;border:1px solid #b0b0b0;box-sizing:border-box;border-radius:1px"></div><div class="a" style="left:755.2px;top:330.2px;width:0.5px;height:8.7px;background:#aaa;"></div><div class="t " style="left:669px;top:330.30px;font-size:5.3px;">From Scene</div><svg style="left:757.800px;top:333px" width="5" height="3.500" viewBox="0 0 5 3.500"><path d="M.6.600l1.900 1.900L4.400.600" stroke="#333" stroke-width=".7" fill="none"/></svg><div class="a" style="left:628px;top:343px;width:6px;height:6px;background:#fafafa;border:1px solid #9a9a9a;box-sizing:border-box"></div><div class="t " style="left:636px;top:341.80px;font-size:5.3px;">Fill Slicer</div><div class="a" style="left:0px;top:312px;width:768px;height:97px;background:linear-gradient(rgba(0,0,0,0),rgba(0,0,0,.018) 10%,rgba(0,0,0,.055) 30%,rgba(0,0,0,.115) 50%,rgba(0,0,0,.18) 70%,rgba(0,0,0,.245) 90%,rgba(0,0,0,.275));pointer-events:none"></div><div class="a" style="left:0px;top:408px;width:768px;height:1px;background:rgba(235,80,80,.32);"></div></div></body></html>
